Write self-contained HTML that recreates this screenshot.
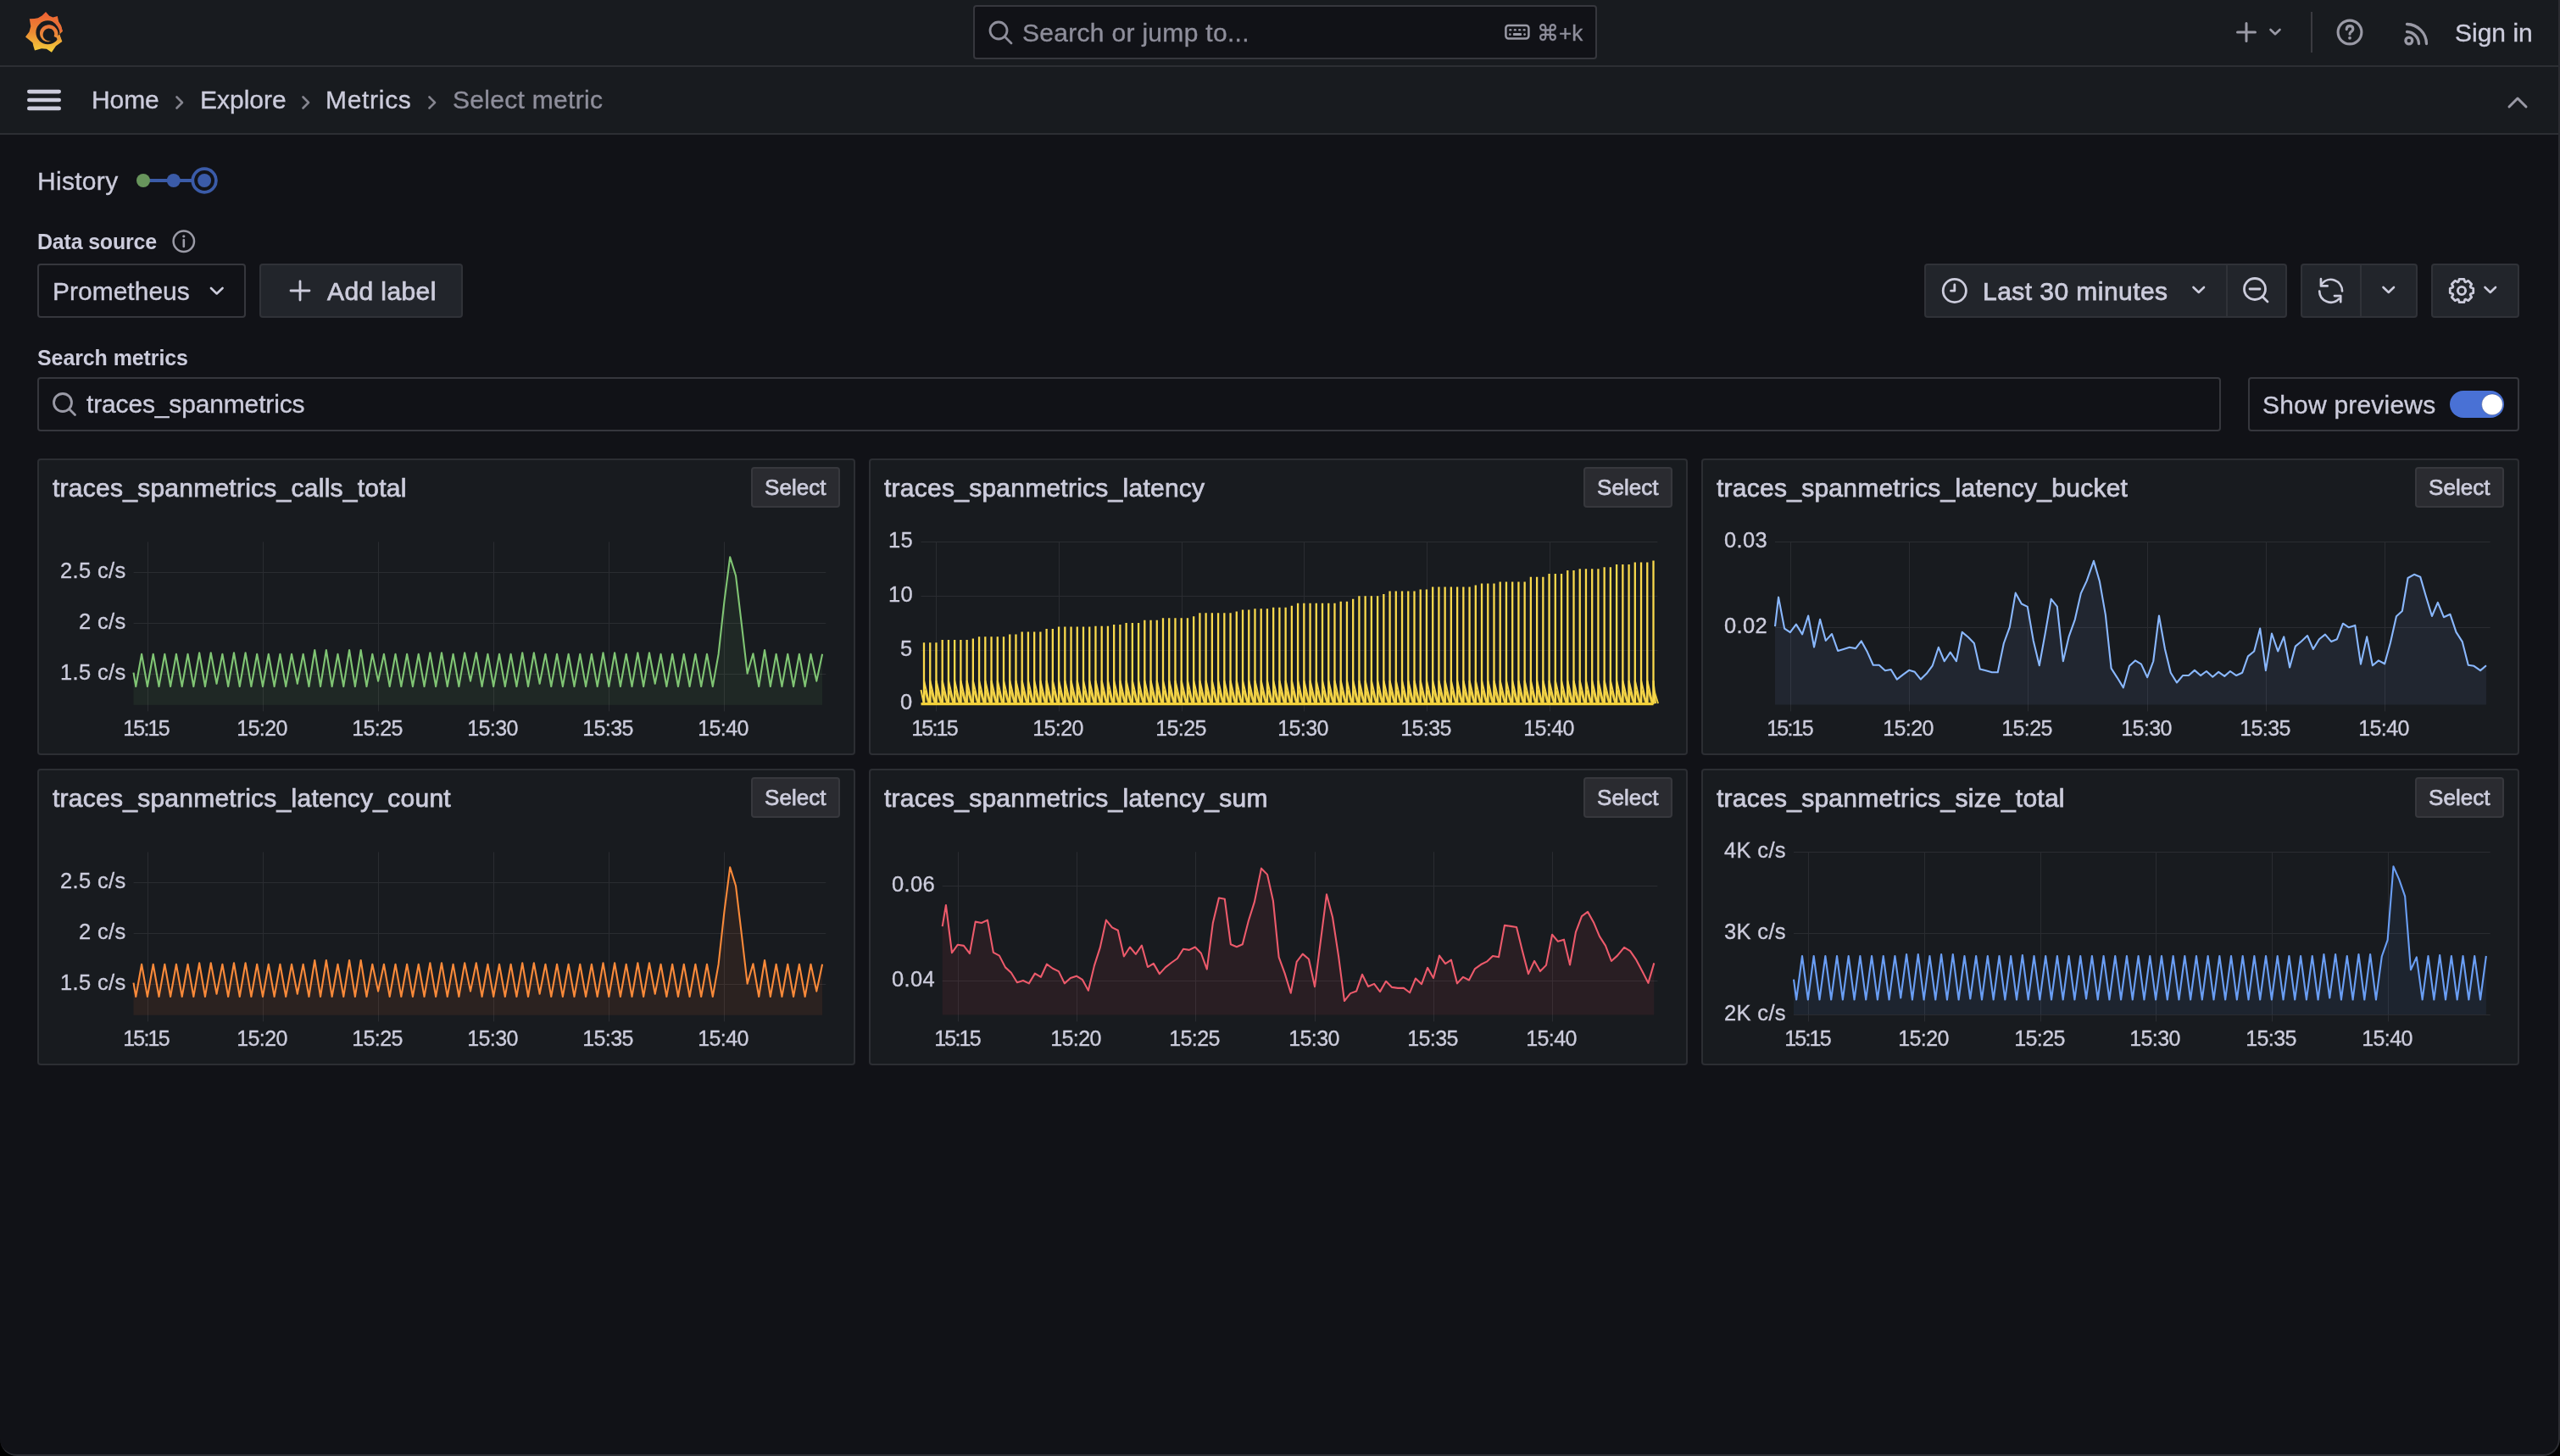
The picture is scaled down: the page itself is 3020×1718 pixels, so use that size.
<!DOCTYPE html>
<html><head><meta charset="utf-8"><title>Grafana - Metrics</title>
<style>
html,body{margin:0;padding:0;background:#000;overflow:hidden;}
#app{position:relative;width:3020px;height:1718px;background:#111217;overflow:hidden;border-bottom-left-radius:20px;border-bottom-right-radius:20px;font-family:"Liberation Sans", sans-serif;}
.t{position:absolute;white-space:nowrap;line-height:1;font-family:"Liberation Sans", sans-serif;-webkit-text-stroke:0.35px currentColor;-webkit-font-smoothing:antialiased;will-change:transform;}
.m{-webkit-text-stroke:0.75px currentColor;}
.b{position:absolute;}
</style></head><body><div id="app">
<div class="b" style="left:0px;top:0px;width:3020px;height:77px;background:#181b1f;border-radius:0px;box-sizing:border-box;"></div><div class="b" style="left:0px;top:77px;width:3020px;height:2px;background:#2c2e33;border-radius:0px;box-sizing:border-box;"></div><svg class="b" style="left:24px;top:10px" width="56" height="56" viewBox="0 0 56 56"><defs><linearGradient id="lg" x1="0" y1="0" x2="0" y2="1"><stop offset="0" stop-color="#ee5f34"/><stop offset="0.5" stop-color="#ea8a33"/><stop offset="1" stop-color="#f5d03c"/></linearGradient></defs>
<polygon fill="url(#lg)" points="30,4 34.2,8.7 38.5,10.4 43.8,9 45.2,15.5 48,20 49.8,27 46.2,30.5 49.4,39 42,44.2 36.9,51.7 31,47.8 25,47.3 17,49.6 15.3,44 14.6,40.4 6,33.5 10.5,27.5 12.3,21 10.8,12.3 16.5,12 20.8,11.2 25.5,8.5"/>
<circle cx="32.4" cy="28.3" r="14" fill="#181b1f"/>
<path d="M39,12.6 Q48.5,17 49.8,27 L46.6,27.8 Q45,20.5 38,15.2 Z" fill="#e86c37"/>
<path d="M43.48,34.81 L43.85,33.90 L44.14,32.96 L44.35,32.00 L44.47,31.02 L44.50,30.04 L44.44,29.06 L44.29,28.09 L44.06,27.13 L43.74,26.21 L43.34,25.31 L42.86,24.45 L42.31,23.64 L41.68,22.88 L40.99,22.19 L40.24,21.55 L39.43,20.99 L38.58,20.50 L37.68,20.09 L36.76,19.77 L35.80,19.53 L34.83,19.37 L33.85,19.30 L32.87,19.32 L31.89,19.43 L30.93,19.63 L29.99,19.91 L29.08,20.28 L28.21,20.73 L27.37,21.25 L26.59,21.85 L25.87,22.51 L25.21,23.24 L24.62,24.03 L24.10,24.86 L23.66,25.74 L23.29,26.65 L23.11,27.62 L23.01,28.59 L22.99,29.55 L23.07,30.51 L23.23,31.44 L23.48,32.35 L23.80,33.23 L24.20,34.06 L24.66,34.85 L25.20,35.59 L25.79,36.27 L26.43,36.88 L27.12,37.43 L27.86,37.91 L28.62,38.32 L29.42,38.65 L30.23,38.91 L31.05,39.09 L31.88,39.20 L32.70,39.22 L33.52,39.17 L34.32,39.05 L35.10,38.86 L35.85,38.60 L35.77,38.31 L35.02,38.40 L34.27,38.42 L33.53,38.37 L32.80,38.26 L32.09,38.08 L31.41,37.84 L30.76,37.54 L30.14,37.19 L29.56,36.79 L29.03,36.34 L28.55,35.84 L28.11,35.31 L27.74,34.75 L27.41,34.17 L27.15,33.56 L26.94,32.94 L26.79,32.30 L26.70,31.67 L26.67,31.03 L26.70,30.40 L26.79,29.78 L26.93,29.18 L27.12,28.60 L27.36,28.05 L27.58,27.50 L27.85,26.97 L28.16,26.46 L28.52,25.99 L28.92,25.55 L29.36,25.14 L29.83,24.78 L30.33,24.47 L30.86,24.19 L31.41,23.97 L31.98,23.80 L32.57,23.68 L33.16,23.61 L33.75,23.60 L34.35,23.64 L34.93,23.74 L35.51,23.88 L36.07,24.08 L36.61,24.33 L37.13,24.62 L37.62,24.96 L38.07,25.35 L38.49,25.77 L38.87,26.23 L39.21,26.72 L39.50,27.24 L39.74,27.78 L39.93,28.34 L40.08,28.92 L40.16,29.51 L40.20,30.10 L40.18,30.70 L40.11,31.29 L39.98,31.87 L39.81,32.44 L39.58,32.99 Z" fill="url(#lg2)"/>
<defs><linearGradient id="lg2" gradientUnits="userSpaceOnUse" x1="0" y1="18" x2="0" y2="42"><stop offset="0" stop-color="#e9703a"/><stop offset="1" stop-color="#ec9a38"/></linearGradient></defs>
<path d="M42.5,33.5 L46.2,30.5 L47.6,35.5 L44,38 Z" fill="#e9963a"/></svg><div class="b" style="left:1148px;top:6px;width:736px;height:64px;background:#111217;border:2px solid #36373d;border-radius:4px;box-sizing:border-box;"></div><svg class="b" style="left:1163px;top:22px" width="36" height="36" viewBox="0 0 36 36"><circle cx="15" cy="14" r="10" fill="none" stroke="#8e8e9b" stroke-width="2.8"/><line x1="22.5" y1="21.5" x2="30" y2="29" stroke="#8e8e9b" stroke-width="2.8" stroke-linecap="round"/></svg><div class="t " style="left:1206.0px;top:23.6px;font-size:30px;color:#8e8e9b;font-weight:400;letter-spacing:0.3px;">Search or jump to...</div><svg class="b" style="left:1774px;top:28px" width="32" height="22" viewBox="0 0 32 22"><rect x="2.4" y="1.9" width="27" height="15.6" rx="3.2" fill="none" stroke="#9a9aa6" stroke-width="2.5"/><g fill="#9a9aa6"><ellipse cx="7.8" cy="7.3" rx="1.6" ry="1.2"/><ellipse cx="13.3" cy="7.3" rx="1.6" ry="1.2"/><ellipse cx="18.7" cy="7.3" rx="1.6" ry="1.2"/><ellipse cx="24.1" cy="7.3" rx="1.6" ry="1.2"/><circle cx="7.3" cy="12.6" r="1.3"/><rect x="10.9" y="11.1" width="10.1" height="3" rx="1"/><circle cx="24.6" cy="12.6" r="1.3"/></g></svg><div class="t " style="left:1813.0px;top:26.0px;font-size:26px;color:#8e8e9b;font-weight:400;letter-spacing:0px;font-family:"Liberation Sans",sans-serif;">&#8984;+k</div><svg class="b" style="left:2636px;top:24px" width="28" height="28" viewBox="0 0 28 28"><path d="M14,3.5 V24.5 M3.5,14 H24.5" stroke="#9a9aa6" stroke-width="3" stroke-linecap="round"/></svg><svg class="b" style="left:2675px;top:32px" width="18" height="13" viewBox="0 0 18 13"><path d="M3.5,3 L9,8.3 L14.5,3" fill="none" stroke="#9a9aa6" stroke-width="2.6" stroke-linecap="round" stroke-linejoin="round"/></svg><div class="b" style="left:2726px;top:14px;width:2px;height:48px;background:#3a3b40;border-radius:0px;box-sizing:border-box;"></div><svg class="b" style="left:2755px;top:21px" width="34" height="34" viewBox="0 0 34 34"><circle cx="17" cy="17" r="13.9" fill="none" stroke="#9a9aa6" stroke-width="3.1"/><path d="M13.2,13.6 Q13.4,9.6 17,9.6 Q20.8,9.6 20.8,13.1 Q20.8,15.6 17.9,17 Q17,17.5 17,19.3" fill="none" stroke="#9a9aa6" stroke-width="3.1" stroke-linecap="round"/><circle cx="17" cy="23.8" r="1.9" fill="#9a9aa6"/></svg><svg class="b" style="left:2834px;top:24px" width="32" height="32" viewBox="0 0 32 32"><circle cx="7.8" cy="24" r="3.9" fill="none" stroke="#9a9aa6" stroke-width="3.3"/><path d="M5.5,13.5 A14.5,14.5 0 0 1 19.5,27.5" fill="none" stroke="#9a9aa6" stroke-width="3.3" stroke-linecap="round"/><path d="M5.5,4.5 A23.5,23.5 0 0 1 28.5,27.5" fill="none" stroke="#9a9aa6" stroke-width="3.3" stroke-linecap="round"/></svg><div class="t " style="left:2896.0px;top:24.1px;font-size:30px;color:#ccccdc;font-weight:400;letter-spacing:0px;">Sign in</div><div class="b" style="left:0px;top:79px;width:3020px;height:78px;background:#181b1f;border-radius:0px;box-sizing:border-box;"></div><div class="b" style="left:0px;top:157px;width:3020px;height:2px;background:#2c2e33;border-radius:0px;box-sizing:border-box;"></div><svg class="b" style="left:30px;top:104px" width="44" height="28" viewBox="0 0 44 28"><g stroke="#ccccdc" stroke-width="4.6" stroke-linecap="round"><line x1="4.3" y1="4.1" x2="39.7" y2="4.1"/><line x1="4.3" y1="14" x2="39.7" y2="14"/><line x1="4.3" y1="23.9" x2="39.7" y2="23.9"/></g></svg><div class="t " style="left:107.7px;top:103.4px;font-size:30px;color:#ccccdc;font-weight:400;letter-spacing:-0.1px;">Home</div><svg class="b" style="left:204px;top:111px" width="16" height="20" viewBox="0 0 16 20"><path d="M4.5,3.5 L11,10 L4.5,16.5" fill="none" stroke="#85858f" stroke-width="2.6" stroke-linecap="round" stroke-linejoin="round"/></svg><div class="t " style="left:236.0px;top:103.4px;font-size:30px;color:#ccccdc;font-weight:400;letter-spacing:0px;">Explore</div><svg class="b" style="left:353px;top:111px" width="16" height="20" viewBox="0 0 16 20"><path d="M4.5,3.5 L11,10 L4.5,16.5" fill="none" stroke="#85858f" stroke-width="2.6" stroke-linecap="round" stroke-linejoin="round"/></svg><div class="t " style="left:384.0px;top:103.4px;font-size:30px;color:#ccccdc;font-weight:400;letter-spacing:0.7px;">Metrics</div><svg class="b" style="left:502px;top:111px" width="16" height="20" viewBox="0 0 16 20"><path d="M4.5,3.5 L11,10 L4.5,16.5" fill="none" stroke="#85858f" stroke-width="2.6" stroke-linecap="round" stroke-linejoin="round"/></svg><div class="t " style="left:534.0px;top:103.4px;font-size:30px;color:#8e8e9b;font-weight:400;letter-spacing:0.3px;">Select metric</div><svg class="b" style="left:2956px;top:111px" width="28" height="20" viewBox="0 0 28 20"><path d="M4,15 L14,5 L24,15" fill="none" stroke="#9a9aa6" stroke-width="3" stroke-linecap="round" stroke-linejoin="round"/></svg><div class="t " style="left:44.0px;top:198.6px;font-size:30px;color:#ccccdc;font-weight:400;letter-spacing:0.3px;">History</div><svg class="b" style="left:148px;top:194px" width="112" height="40" viewBox="0 0 112 40"><line x1="21" y1="19" x2="93" y2="19" stroke="#3b5ba8" stroke-width="4.2"/><circle cx="21" cy="19" r="8" fill="#68955c"/><circle cx="56.8" cy="19" r="8" fill="#3b5ba8"/><circle cx="93.1" cy="19" r="13.8" fill="#111217" stroke="#3b5ba8" stroke-width="3.8"/><circle cx="93.1" cy="19" r="8" fill="#3b5ba8"/></svg><div class="t " style="left:44.0px;top:272.8px;font-size:25px;color:#ccccdc;font-weight:700;letter-spacing:-0.2px;-webkit-text-stroke:0;">Data source</div><svg class="b" style="left:202px;top:270px" width="30" height="30" viewBox="0 0 30 30"><circle cx="14.8" cy="14.8" r="12.2" fill="none" stroke="#9a9aa6" stroke-width="2.5"/><line x1="14.8" y1="13" x2="14.8" y2="21" stroke="#9a9aa6" stroke-width="2.6" stroke-linecap="round"/><circle cx="14.8" cy="8.8" r="1.6" fill="#9a9aa6"/></svg><div class="b" style="left:44px;top:311px;width:246px;height:64px;background:#111217;border:2px solid #36373d;border-radius:4px;box-sizing:border-box;"></div><div class="t " style="left:61.5px;top:328.6px;font-size:30px;color:#ccccdc;font-weight:400;letter-spacing:0px;">Prometheus</div><svg class="b" style="left:246px;top:336px" width="20" height="16" viewBox="0 0 20 16"><path d="M3,4 L9.7,10.5 L16.5,4" fill="none" stroke="#ccccdc" stroke-width="2.6" stroke-linecap="round" stroke-linejoin="round"/></svg><div class="b" style="left:306px;top:311px;width:240px;height:64px;background:#22252b;border:2px solid #303238;border-radius:4px;box-sizing:border-box;"></div><svg class="b" style="left:340px;top:329px" width="28" height="28" viewBox="0 0 28 28"><path d="M14,3 V25 M3,14 H25" stroke="#ccccdc" stroke-width="2.8" stroke-linecap="round"/></svg><div class="t m" style="left:386.0px;top:328.6px;font-size:30px;color:#ccccdc;font-weight:400;letter-spacing:0.4px;">Add label</div><div class="b" style="left:2270px;top:311px;width:428px;height:64px;background:#22252b;border:2px solid #303238;border-radius:4px;box-sizing:border-box;"></div><div class="b" style="left:2626px;top:313px;width:2px;height:60px;background:#303238;border-radius:0px;box-sizing:border-box;"></div><svg class="b" style="left:2286px;top:324px" width="38" height="38" viewBox="0 0 38 38"><circle cx="19.8" cy="19" r="13.6" fill="none" stroke="#ccccdc" stroke-width="2.8"/><path d="M19.8,12 V19.2 H15.5" fill="none" stroke="#ccccdc" stroke-width="2.8" stroke-linecap="round" stroke-linejoin="round"/></svg><div class="t m" style="left:2339.0px;top:328.6px;font-size:30px;color:#ccccdc;font-weight:400;letter-spacing:0.45px;">Last 30 minutes</div><svg class="b" style="left:2584px;top:334px" width="20" height="16" viewBox="0 0 20 16"><path d="M3.5,5 L9.8,11 L16,5" fill="none" stroke="#ccccdc" stroke-width="2.6" stroke-linecap="round" stroke-linejoin="round"/></svg><svg class="b" style="left:2643px;top:324px" width="38" height="38" viewBox="0 0 38 38"><circle cx="17" cy="17" r="12.5" fill="none" stroke="#ccccdc" stroke-width="2.8"/><line x1="11" y1="17" x2="23" y2="17" stroke="#ccccdc" stroke-width="2.8" stroke-linecap="round"/><line x1="26" y1="26" x2="32" y2="32" stroke="#ccccdc" stroke-width="2.8" stroke-linecap="round"/></svg><div class="b" style="left:2714px;top:311px;width:138px;height:64px;background:#22252b;border:2px solid #303238;border-radius:4px;box-sizing:border-box;"></div><div class="b" style="left:2784px;top:313px;width:2px;height:60px;background:#303238;border-radius:0px;box-sizing:border-box;"></div><svg class="b" style="left:2730px;top:324px" width="38" height="38" viewBox="0 0 38 38"><g transform="translate(20,19) scale(0.92) translate(-20,-19)"><path d="M8.3,9.8 A14.8,14.8 0 0 1 34.2,19.5" fill="none" stroke="#ccccdc" stroke-width="2.9" stroke-linecap="round"/><path d="M6.9,4 V12.9 H15.3" fill="none" stroke="#ccccdc" stroke-width="2.9" stroke-linecap="round" stroke-linejoin="round"/><path d="M5,19.5 A14.6,14.6 0 0 0 30,29.5" fill="none" stroke="#ccccdc" stroke-width="2.9" stroke-linecap="round"/><path d="M24.3,25.6 H32.2 V33.5" fill="none" stroke="#ccccdc" stroke-width="2.9" stroke-linecap="round" stroke-linejoin="round"/></g></svg><svg class="b" style="left:2808px;top:334px" width="20" height="16" viewBox="0 0 20 16"><path d="M3.5,5 L9.8,11 L16,5" fill="none" stroke="#ccccdc" stroke-width="2.6" stroke-linecap="round" stroke-linejoin="round"/></svg><div class="b" style="left:2868px;top:311px;width:104px;height:64px;background:#22252b;border:2px solid #303238;border-radius:4px;box-sizing:border-box;"></div><svg class="b" style="left:2884px;top:323px" width="40" height="40" viewBox="0 0 40 40"><polygon points="33.72,17.22 33.72,22.78 30.56,23.74 30.11,24.83 31.67,27.74 27.74,31.67 24.83,30.11 23.74,30.56 22.78,33.72 17.22,33.72 16.26,30.56 15.17,30.11 12.26,31.67 8.33,27.74 9.89,24.83 9.44,23.74 6.28,22.78 6.28,17.22 9.44,16.26 9.89,15.17 8.33,12.26 12.26,8.33 15.17,9.89 16.26,9.44 17.22,6.28 22.78,6.28 23.74,9.44 24.83,9.89 27.74,8.33 31.67,12.26 30.11,15.17 30.56,16.26" fill="none" stroke="#ccccdc" stroke-width="2.8" stroke-linejoin="round"/><circle cx="20" cy="20" r="4.6" fill="none" stroke="#ccccdc" stroke-width="2.9"/></svg><svg class="b" style="left:2928px;top:334px" width="20" height="16" viewBox="0 0 20 16"><path d="M3.5,5 L9.8,11 L16,5" fill="none" stroke="#ccccdc" stroke-width="2.6" stroke-linecap="round" stroke-linejoin="round"/></svg><div class="t " style="left:44.0px;top:409.8px;font-size:25px;color:#ccccdc;font-weight:700;letter-spacing:-0.1px;-webkit-text-stroke:0;">Search metrics</div><div class="b" style="left:44px;top:445px;width:2576px;height:64px;background:#111217;border:2px solid #36373d;border-radius:4px;box-sizing:border-box;"></div><svg class="b" style="left:60px;top:461px" width="34" height="34" viewBox="0 0 34 34"><circle cx="14" cy="14" r="10.5" fill="none" stroke="#9a9aa6" stroke-width="2.8"/><line x1="22" y1="22" x2="28.5" y2="28.5" stroke="#9a9aa6" stroke-width="2.8" stroke-linecap="round"/></svg><div class="t " style="left:102.0px;top:462.2px;font-size:30px;color:#ccccdc;font-weight:400;letter-spacing:-0.15px;">traces_spanmetrics</div><div class="b" style="left:2652px;top:445px;width:320px;height:64px;background:#111217;border:2px solid #36373d;border-radius:4px;box-sizing:border-box;"></div><div class="t " style="left:2669.0px;top:462.6px;font-size:30px;color:#ccccdc;font-weight:400;letter-spacing:0.2px;">Show previews</div><div class="b" style="left:2890px;top:461px;width:64px;height:32px;background:#4971d5;border-radius:16px;box-sizing:border-box;"></div><svg class="b" style="left:2924px;top:464px" width="32" height="26" viewBox="0 0 32 26"><circle cx="16" cy="13.3" r="12.4" fill="#ffffff" stroke="rgba(20,40,100,0.45)" stroke-width="0.8"/></svg><div class="b" style="left:44px;top:541px;width:965px;height:350px;background:#181b1f;border:2px solid #2c2e33;border-radius:4px;box-sizing:border-box;"></div><div class="t m" style="left:61.5px;top:561.1px;font-size:30px;color:#ccccdc;font-weight:400;letter-spacing:0.25px;">traces_spanmetrics_calls_total</div><div class="b" style="left:886px;top:551px;width:105px;height:48px;background:#2a2b30;border:2px solid #37383d;border-radius:4px;box-sizing:border-box;"></div><div class="t m" style="left:901.5px;top:562.0px;font-size:26px;color:#ccccdc;font-weight:400;letter-spacing:0.05px;">Select</div><div class="b" style="left:1025px;top:541px;width:966px;height:350px;background:#181b1f;border:2px solid #2c2e33;border-radius:4px;box-sizing:border-box;"></div><div class="t m" style="left:1042.5px;top:561.1px;font-size:30px;color:#ccccdc;font-weight:400;letter-spacing:0.25px;">traces_spanmetrics_latency</div><div class="b" style="left:1868px;top:551px;width:105px;height:48px;background:#2a2b30;border:2px solid #37383d;border-radius:4px;box-sizing:border-box;"></div><div class="t m" style="left:1883.5px;top:562.0px;font-size:26px;color:#ccccdc;font-weight:400;letter-spacing:0.05px;">Select</div><div class="b" style="left:2007px;top:541px;width:965px;height:350px;background:#181b1f;border:2px solid #2c2e33;border-radius:4px;box-sizing:border-box;"></div><div class="t m" style="left:2024.5px;top:561.1px;font-size:30px;color:#ccccdc;font-weight:400;letter-spacing:0.25px;">traces_spanmetrics_latency_bucket</div><div class="b" style="left:2849px;top:551px;width:105px;height:48px;background:#2a2b30;border:2px solid #37383d;border-radius:4px;box-sizing:border-box;"></div><div class="t m" style="left:2864.5px;top:562.0px;font-size:26px;color:#ccccdc;font-weight:400;letter-spacing:0.05px;">Select</div><div class="b" style="left:44px;top:907px;width:965px;height:350px;background:#181b1f;border:2px solid #2c2e33;border-radius:4px;box-sizing:border-box;"></div><div class="t m" style="left:61.5px;top:927.1px;font-size:30px;color:#ccccdc;font-weight:400;letter-spacing:0.25px;">traces_spanmetrics_latency_count</div><div class="b" style="left:886px;top:917px;width:105px;height:48px;background:#2a2b30;border:2px solid #37383d;border-radius:4px;box-sizing:border-box;"></div><div class="t m" style="left:901.5px;top:928.0px;font-size:26px;color:#ccccdc;font-weight:400;letter-spacing:0.05px;">Select</div><div class="b" style="left:1025px;top:907px;width:966px;height:350px;background:#181b1f;border:2px solid #2c2e33;border-radius:4px;box-sizing:border-box;"></div><div class="t m" style="left:1042.5px;top:927.1px;font-size:30px;color:#ccccdc;font-weight:400;letter-spacing:0.25px;">traces_spanmetrics_latency_sum</div><div class="b" style="left:1868px;top:917px;width:105px;height:48px;background:#2a2b30;border:2px solid #37383d;border-radius:4px;box-sizing:border-box;"></div><div class="t m" style="left:1883.5px;top:928.0px;font-size:26px;color:#ccccdc;font-weight:400;letter-spacing:0.05px;">Select</div><div class="b" style="left:2007px;top:907px;width:965px;height:350px;background:#181b1f;border:2px solid #2c2e33;border-radius:4px;box-sizing:border-box;"></div><div class="t m" style="left:2024.5px;top:927.1px;font-size:30px;color:#ccccdc;font-weight:400;letter-spacing:0.25px;">traces_spanmetrics_size_total</div><div class="b" style="left:2849px;top:917px;width:105px;height:48px;background:#2a2b30;border:2px solid #37383d;border-radius:4px;box-sizing:border-box;"></div><div class="t m" style="left:2864.5px;top:928.0px;font-size:26px;color:#ccccdc;font-weight:400;letter-spacing:0.05px;">Select</div><div class="t" style="right:2871.5px;top:661.0px;font-size:25.5px;color:#ccccdc;font-weight:400;letter-spacing:0.35px;">2.5 c/s</div><div class="t" style="right:2871.5px;top:720.8px;font-size:25.5px;color:#ccccdc;font-weight:400;letter-spacing:0.35px;">2 c/s</div><div class="t" style="right:2871.5px;top:780.9px;font-size:25.5px;color:#ccccdc;font-weight:400;letter-spacing:0.35px;">1.5 c/s</div><div class="t" style="left:-127.7px;width:600px;text-align:center;top:846.8px;font-size:25px;color:#ccccdc;font-weight:400;letter-spacing:-1.8px;">15:15</div><div class="t" style="left:9.1px;width:600px;text-align:center;top:846.8px;font-size:25px;color:#ccccdc;font-weight:400;letter-spacing:-0.6px;">15:20</div><div class="t" style="left:145.2px;width:600px;text-align:center;top:846.8px;font-size:25px;color:#ccccdc;font-weight:400;letter-spacing:-0.6px;">15:25</div><div class="t" style="left:280.9px;width:600px;text-align:center;top:846.8px;font-size:25px;color:#ccccdc;font-weight:400;letter-spacing:-0.6px;">15:30</div><div class="t" style="left:417.0px;width:600px;text-align:center;top:846.8px;font-size:25px;color:#ccccdc;font-weight:400;letter-spacing:-0.6px;">15:35</div><div class="t" style="left:553.1px;width:600px;text-align:center;top:846.8px;font-size:25px;color:#ccccdc;font-weight:400;letter-spacing:-0.6px;">15:40</div><div class="t" style="right:2871.5px;top:1027.0px;font-size:25.5px;color:#ccccdc;font-weight:400;letter-spacing:0.35px;">2.5 c/s</div><div class="t" style="right:2871.5px;top:1086.8px;font-size:25.5px;color:#ccccdc;font-weight:400;letter-spacing:0.35px;">2 c/s</div><div class="t" style="right:2871.5px;top:1146.9px;font-size:25.5px;color:#ccccdc;font-weight:400;letter-spacing:0.35px;">1.5 c/s</div><div class="t" style="left:-127.7px;width:600px;text-align:center;top:1212.8px;font-size:25px;color:#ccccdc;font-weight:400;letter-spacing:-1.8px;">15:15</div><div class="t" style="left:9.1px;width:600px;text-align:center;top:1212.8px;font-size:25px;color:#ccccdc;font-weight:400;letter-spacing:-0.6px;">15:20</div><div class="t" style="left:145.2px;width:600px;text-align:center;top:1212.8px;font-size:25px;color:#ccccdc;font-weight:400;letter-spacing:-0.6px;">15:25</div><div class="t" style="left:280.9px;width:600px;text-align:center;top:1212.8px;font-size:25px;color:#ccccdc;font-weight:400;letter-spacing:-0.6px;">15:30</div><div class="t" style="left:417.0px;width:600px;text-align:center;top:1212.8px;font-size:25px;color:#ccccdc;font-weight:400;letter-spacing:-0.6px;">15:35</div><div class="t" style="left:553.1px;width:600px;text-align:center;top:1212.8px;font-size:25px;color:#ccccdc;font-weight:400;letter-spacing:-0.6px;">15:40</div><div class="t" style="right:913.0px;top:990.8px;font-size:25.5px;color:#ccccdc;font-weight:400;letter-spacing:0.35px;">4K c/s</div><div class="t" style="right:913.0px;top:1086.7px;font-size:25.5px;color:#ccccdc;font-weight:400;letter-spacing:0.35px;">3K c/s</div><div class="t" style="right:913.0px;top:1183.0px;font-size:25.5px;color:#ccccdc;font-weight:400;letter-spacing:0.35px;">2K c/s</div><div class="t" style="left:1831.5px;width:600px;text-align:center;top:1212.8px;font-size:25px;color:#ccccdc;font-weight:400;letter-spacing:-1.8px;">15:15</div><div class="t" style="left:1969.0px;width:600px;text-align:center;top:1212.8px;font-size:25px;color:#ccccdc;font-weight:400;letter-spacing:-0.6px;">15:20</div><div class="t" style="left:2105.9px;width:600px;text-align:center;top:1212.8px;font-size:25px;color:#ccccdc;font-weight:400;letter-spacing:-0.6px;">15:25</div><div class="t" style="left:2242.0px;width:600px;text-align:center;top:1212.8px;font-size:25px;color:#ccccdc;font-weight:400;letter-spacing:-0.6px;">15:30</div><div class="t" style="left:2378.9px;width:600px;text-align:center;top:1212.8px;font-size:25px;color:#ccccdc;font-weight:400;letter-spacing:-0.6px;">15:35</div><div class="t" style="left:2515.8px;width:600px;text-align:center;top:1212.8px;font-size:25px;color:#ccccdc;font-weight:400;letter-spacing:-0.6px;">15:40</div><div class="t" style="right:935.0px;top:625.0px;font-size:25.5px;color:#ccccdc;font-weight:400;letter-spacing:0.35px;">0.03</div><div class="t" style="right:935.0px;top:725.6px;font-size:25.5px;color:#ccccdc;font-weight:400;letter-spacing:0.35px;">0.02</div><div class="t" style="left:1810.6px;width:600px;text-align:center;top:846.8px;font-size:25px;color:#ccccdc;font-weight:400;letter-spacing:-1.8px;">15:15</div><div class="t" style="left:1951.2px;width:600px;text-align:center;top:846.8px;font-size:25px;color:#ccccdc;font-weight:400;letter-spacing:-0.6px;">15:20</div><div class="t" style="left:2091.2px;width:600px;text-align:center;top:846.8px;font-size:25px;color:#ccccdc;font-weight:400;letter-spacing:-0.6px;">15:25</div><div class="t" style="left:2232.0px;width:600px;text-align:center;top:846.8px;font-size:25px;color:#ccccdc;font-weight:400;letter-spacing:-0.6px;">15:30</div><div class="t" style="left:2371.9px;width:600px;text-align:center;top:846.8px;font-size:25px;color:#ccccdc;font-weight:400;letter-spacing:-0.6px;">15:35</div><div class="t" style="left:2511.9px;width:600px;text-align:center;top:846.8px;font-size:25px;color:#ccccdc;font-weight:400;letter-spacing:-0.6px;">15:40</div><div class="t" style="right:1917.0px;top:1030.6px;font-size:25.5px;color:#ccccdc;font-weight:400;letter-spacing:0.35px;">0.06</div><div class="t" style="right:1917.0px;top:1142.8px;font-size:25.5px;color:#ccccdc;font-weight:400;letter-spacing:0.35px;">0.04</div><div class="t" style="left:828.7px;width:600px;text-align:center;top:1212.8px;font-size:25px;color:#ccccdc;font-weight:400;letter-spacing:-1.8px;">15:15</div><div class="t" style="left:968.9px;width:600px;text-align:center;top:1212.8px;font-size:25px;color:#ccccdc;font-weight:400;letter-spacing:-0.6px;">15:20</div><div class="t" style="left:1108.9px;width:600px;text-align:center;top:1212.8px;font-size:25px;color:#ccccdc;font-weight:400;letter-spacing:-0.6px;">15:25</div><div class="t" style="left:1250.1px;width:600px;text-align:center;top:1212.8px;font-size:25px;color:#ccccdc;font-weight:400;letter-spacing:-0.6px;">15:30</div><div class="t" style="left:1390.0px;width:600px;text-align:center;top:1212.8px;font-size:25px;color:#ccccdc;font-weight:400;letter-spacing:-0.6px;">15:35</div><div class="t" style="left:1530.0px;width:600px;text-align:center;top:1212.8px;font-size:25px;color:#ccccdc;font-weight:400;letter-spacing:-0.6px;">15:40</div><div class="t" style="right:1943.0px;top:625.0px;font-size:25.5px;color:#ccccdc;font-weight:400;letter-spacing:0.35px;">15</div><div class="t" style="right:1943.0px;top:688.8px;font-size:25.5px;color:#ccccdc;font-weight:400;letter-spacing:0.35px;">10</div><div class="t" style="right:1943.0px;top:752.6px;font-size:25.5px;color:#ccccdc;font-weight:400;letter-spacing:0.35px;">5</div><div class="t" style="right:1943.0px;top:816.4px;font-size:25.5px;color:#ccccdc;font-weight:400;letter-spacing:0.35px;">0</div><div class="t" style="left:802.4px;width:600px;text-align:center;top:846.8px;font-size:25px;color:#ccccdc;font-weight:400;letter-spacing:-1.8px;">15:15</div><div class="t" style="left:948.0px;width:600px;text-align:center;top:846.8px;font-size:25px;color:#ccccdc;font-weight:400;letter-spacing:-0.6px;">15:20</div><div class="t" style="left:1093.0px;width:600px;text-align:center;top:846.8px;font-size:25px;color:#ccccdc;font-weight:400;letter-spacing:-0.6px;">15:25</div><div class="t" style="left:1236.9px;width:600px;text-align:center;top:846.8px;font-size:25px;color:#ccccdc;font-weight:400;letter-spacing:-0.6px;">15:30</div><div class="t" style="left:1381.9px;width:600px;text-align:center;top:846.8px;font-size:25px;color:#ccccdc;font-weight:400;letter-spacing:-0.6px;">15:35</div><div class="t" style="left:1526.9px;width:600px;text-align:center;top:846.8px;font-size:25px;color:#ccccdc;font-weight:400;letter-spacing:-0.6px;">15:40</div>
<svg class="b" style="left:0;top:0" width="3020" height="1718" viewBox="0 0 3020 1718"><rect x="157.6" y="675" width="816.7" height="1" fill="#2a2c31"/><rect x="157.6" y="735" width="816.7" height="1" fill="#2a2c31"/><rect x="157.6" y="795" width="816.7" height="1" fill="#2a2c31"/><rect x="174" y="639.4" width="1" height="200.0" fill="#2a2c31"/><rect x="310" y="639.4" width="1" height="200.0" fill="#2a2c31"/><rect x="446" y="639.4" width="1" height="200.0" fill="#2a2c31"/><rect x="582" y="639.4" width="1" height="200.0" fill="#2a2c31"/><rect x="718" y="639.4" width="1" height="200.0" fill="#2a2c31"/><rect x="854" y="639.4" width="1" height="200.0" fill="#2a2c31"/><path d="M157.50,793.65 L160.29,810.00 L167.10,771.80 L173.91,810.00 L180.71,771.80 L187.51,810.00 L194.32,771.80 L201.12,810.00 L207.93,771.80 L214.73,810.00 L221.54,771.80 L228.34,810.00 L235.15,770.20 L241.95,810.00 L248.76,770.20 L255.56,806.80 L262.37,771.80 L269.17,810.00 L275.98,770.20 L282.78,810.00 L289.59,770.20 L296.39,810.00 L303.20,771.80 L310.00,810.00 L316.81,771.80 L323.62,810.00 L330.42,771.80 L337.23,810.00 L344.03,771.80 L350.83,806.80 L357.64,771.80 L364.44,810.00 L371.25,767.00 L378.05,810.00 L384.86,767.00 L391.66,810.00 L398.47,771.80 L405.27,810.00 L412.08,767.00 L418.88,810.00 L425.69,767.00 L432.50,810.00 L439.30,771.80 L446.11,803.60 L452.91,771.80 L459.72,810.00 L466.52,771.80 L473.32,810.00 L480.13,771.80 L486.93,810.00 L493.74,771.80 L500.54,810.00 L507.35,770.20 L514.15,810.00 L520.96,770.20 L527.76,810.00 L534.57,771.80 L541.38,810.00 L548.18,770.20 L554.99,803.60 L561.79,770.20 L568.60,810.00 L575.40,771.80 L582.20,810.00 L589.01,771.80 L595.81,810.00 L602.62,771.80 L609.42,810.00 L616.23,770.20 L623.03,810.00 L629.84,770.20 L636.64,806.80 L643.45,771.80 L650.25,810.00 L657.06,771.80 L663.87,810.00 L670.67,771.80 L677.48,810.00 L684.28,771.80 L691.09,810.00 L697.89,771.80 L704.70,810.00 L711.50,770.20 L718.30,810.00 L725.11,770.20 L731.91,810.00 L738.72,771.80 L745.52,810.00 L752.33,770.20 L759.13,810.00 L765.94,770.20 L772.75,806.80 L779.55,771.80 L786.36,810.00 L793.16,771.80 L799.97,810.00 L806.77,771.80 L813.58,810.00 L820.38,771.80 L827.18,810.00 L833.99,771.80 L840.79,810.00 L847.60,771.90 L854.40,710.00 L861.21,657.20 L868.01,679.20 L874.82,736.20 L881.62,794.60 L888.43,771.20 L895.24,810.00 L902.04,767.00 L908.85,810.00 L915.65,771.80 L922.46,810.00 L929.26,771.80 L936.06,810.00 L942.87,771.80 L949.67,810.00 L956.48,771.80 L963.28,803.60 L970.09,771.80 L970.09,831.7 L157.50,831.7 Z" fill="rgba(115,191,105,0.085)" stroke="none"/><path d="M157.50,793.65 L160.29,810.00 L167.10,771.80 L173.91,810.00 L180.71,771.80 L187.51,810.00 L194.32,771.80 L201.12,810.00 L207.93,771.80 L214.73,810.00 L221.54,771.80 L228.34,810.00 L235.15,770.20 L241.95,810.00 L248.76,770.20 L255.56,806.80 L262.37,771.80 L269.17,810.00 L275.98,770.20 L282.78,810.00 L289.59,770.20 L296.39,810.00 L303.20,771.80 L310.00,810.00 L316.81,771.80 L323.62,810.00 L330.42,771.80 L337.23,810.00 L344.03,771.80 L350.83,806.80 L357.64,771.80 L364.44,810.00 L371.25,767.00 L378.05,810.00 L384.86,767.00 L391.66,810.00 L398.47,771.80 L405.27,810.00 L412.08,767.00 L418.88,810.00 L425.69,767.00 L432.50,810.00 L439.30,771.80 L446.11,803.60 L452.91,771.80 L459.72,810.00 L466.52,771.80 L473.32,810.00 L480.13,771.80 L486.93,810.00 L493.74,771.80 L500.54,810.00 L507.35,770.20 L514.15,810.00 L520.96,770.20 L527.76,810.00 L534.57,771.80 L541.38,810.00 L548.18,770.20 L554.99,803.60 L561.79,770.20 L568.60,810.00 L575.40,771.80 L582.20,810.00 L589.01,771.80 L595.81,810.00 L602.62,771.80 L609.42,810.00 L616.23,770.20 L623.03,810.00 L629.84,770.20 L636.64,806.80 L643.45,771.80 L650.25,810.00 L657.06,771.80 L663.87,810.00 L670.67,771.80 L677.48,810.00 L684.28,771.80 L691.09,810.00 L697.89,771.80 L704.70,810.00 L711.50,770.20 L718.30,810.00 L725.11,770.20 L731.91,810.00 L738.72,771.80 L745.52,810.00 L752.33,770.20 L759.13,810.00 L765.94,770.20 L772.75,806.80 L779.55,771.80 L786.36,810.00 L793.16,771.80 L799.97,810.00 L806.77,771.80 L813.58,810.00 L820.38,771.80 L827.18,810.00 L833.99,771.80 L840.79,810.00 L847.60,771.90 L854.40,710.00 L861.21,657.20 L868.01,679.20 L874.82,736.20 L881.62,794.60 L888.43,771.20 L895.24,810.00 L902.04,767.00 L908.85,810.00 L915.65,771.80 L922.46,810.00 L929.26,771.80 L936.06,810.00 L942.87,771.80 L949.67,810.00 L956.48,771.80 L963.28,803.60 L970.09,771.80" fill="none" stroke="#80c574" stroke-width="2.1" stroke-linejoin="round"/><rect x="157.6" y="1041" width="816.7" height="1" fill="#2a2c31"/><rect x="157.6" y="1101" width="816.7" height="1" fill="#2a2c31"/><rect x="157.6" y="1161" width="816.7" height="1" fill="#2a2c31"/><rect x="174" y="1005.4" width="1" height="200.0" fill="#2a2c31"/><rect x="310" y="1005.4" width="1" height="200.0" fill="#2a2c31"/><rect x="446" y="1005.4" width="1" height="200.0" fill="#2a2c31"/><rect x="582" y="1005.4" width="1" height="200.0" fill="#2a2c31"/><rect x="718" y="1005.4" width="1" height="200.0" fill="#2a2c31"/><rect x="854" y="1005.4" width="1" height="200.0" fill="#2a2c31"/><path d="M157.50,1159.65 L160.29,1176.00 L167.10,1137.80 L173.91,1176.00 L180.71,1137.80 L187.51,1176.00 L194.32,1137.80 L201.12,1176.00 L207.93,1137.80 L214.73,1176.00 L221.54,1137.80 L228.34,1176.00 L235.15,1136.20 L241.95,1176.00 L248.76,1136.20 L255.56,1172.80 L262.37,1137.80 L269.17,1176.00 L275.98,1136.20 L282.78,1176.00 L289.59,1136.20 L296.39,1176.00 L303.20,1137.80 L310.00,1176.00 L316.81,1137.80 L323.62,1176.00 L330.42,1137.80 L337.23,1176.00 L344.03,1137.80 L350.83,1172.80 L357.64,1137.80 L364.44,1176.00 L371.25,1133.00 L378.05,1176.00 L384.86,1133.00 L391.66,1176.00 L398.47,1137.80 L405.27,1176.00 L412.08,1133.00 L418.88,1176.00 L425.69,1133.00 L432.50,1176.00 L439.30,1137.80 L446.11,1169.60 L452.91,1137.80 L459.72,1176.00 L466.52,1137.80 L473.32,1176.00 L480.13,1137.80 L486.93,1176.00 L493.74,1137.80 L500.54,1176.00 L507.35,1136.20 L514.15,1176.00 L520.96,1136.20 L527.76,1176.00 L534.57,1137.80 L541.38,1176.00 L548.18,1136.20 L554.99,1169.60 L561.79,1136.20 L568.60,1176.00 L575.40,1137.80 L582.20,1176.00 L589.01,1137.80 L595.81,1176.00 L602.62,1137.80 L609.42,1176.00 L616.23,1136.20 L623.03,1176.00 L629.84,1136.20 L636.64,1172.80 L643.45,1137.80 L650.25,1176.00 L657.06,1137.80 L663.87,1176.00 L670.67,1137.80 L677.48,1176.00 L684.28,1137.80 L691.09,1176.00 L697.89,1137.80 L704.70,1176.00 L711.50,1136.20 L718.30,1176.00 L725.11,1136.20 L731.91,1176.00 L738.72,1137.80 L745.52,1176.00 L752.33,1136.20 L759.13,1176.00 L765.94,1136.20 L772.75,1172.80 L779.55,1137.80 L786.36,1176.00 L793.16,1137.80 L799.97,1176.00 L806.77,1137.80 L813.58,1176.00 L820.38,1137.80 L827.18,1176.00 L833.99,1137.80 L840.79,1176.00 L847.60,1137.90 L854.40,1076.00 L861.21,1023.20 L868.01,1045.20 L874.82,1102.20 L881.62,1160.60 L888.43,1137.20 L895.24,1176.00 L902.04,1133.00 L908.85,1176.00 L915.65,1137.80 L922.46,1176.00 L929.26,1137.80 L936.06,1176.00 L942.87,1137.80 L949.67,1176.00 L956.48,1137.80 L963.28,1169.60 L970.09,1137.80 L970.09,1197.7 L157.50,1197.7 Z" fill="rgba(250,120,50,0.085)" stroke="none"/><path d="M157.50,1159.65 L160.29,1176.00 L167.10,1137.80 L173.91,1176.00 L180.71,1137.80 L187.51,1176.00 L194.32,1137.80 L201.12,1176.00 L207.93,1137.80 L214.73,1176.00 L221.54,1137.80 L228.34,1176.00 L235.15,1136.20 L241.95,1176.00 L248.76,1136.20 L255.56,1172.80 L262.37,1137.80 L269.17,1176.00 L275.98,1136.20 L282.78,1176.00 L289.59,1136.20 L296.39,1176.00 L303.20,1137.80 L310.00,1176.00 L316.81,1137.80 L323.62,1176.00 L330.42,1137.80 L337.23,1176.00 L344.03,1137.80 L350.83,1172.80 L357.64,1137.80 L364.44,1176.00 L371.25,1133.00 L378.05,1176.00 L384.86,1133.00 L391.66,1176.00 L398.47,1137.80 L405.27,1176.00 L412.08,1133.00 L418.88,1176.00 L425.69,1133.00 L432.50,1176.00 L439.30,1137.80 L446.11,1169.60 L452.91,1137.80 L459.72,1176.00 L466.52,1137.80 L473.32,1176.00 L480.13,1137.80 L486.93,1176.00 L493.74,1137.80 L500.54,1176.00 L507.35,1136.20 L514.15,1176.00 L520.96,1136.20 L527.76,1176.00 L534.57,1137.80 L541.38,1176.00 L548.18,1136.20 L554.99,1169.60 L561.79,1136.20 L568.60,1176.00 L575.40,1137.80 L582.20,1176.00 L589.01,1137.80 L595.81,1176.00 L602.62,1137.80 L609.42,1176.00 L616.23,1136.20 L623.03,1176.00 L629.84,1136.20 L636.64,1172.80 L643.45,1137.80 L650.25,1176.00 L657.06,1137.80 L663.87,1176.00 L670.67,1137.80 L677.48,1176.00 L684.28,1137.80 L691.09,1176.00 L697.89,1137.80 L704.70,1176.00 L711.50,1136.20 L718.30,1176.00 L725.11,1136.20 L731.91,1176.00 L738.72,1137.80 L745.52,1176.00 L752.33,1136.20 L759.13,1176.00 L765.94,1136.20 L772.75,1172.80 L779.55,1137.80 L786.36,1176.00 L793.16,1137.80 L799.97,1176.00 L806.77,1137.80 L813.58,1176.00 L820.38,1137.80 L827.18,1176.00 L833.99,1137.80 L840.79,1176.00 L847.60,1137.90 L854.40,1076.00 L861.21,1023.20 L868.01,1045.20 L874.82,1102.20 L881.62,1160.60 L888.43,1137.20 L895.24,1176.00 L902.04,1133.00 L908.85,1176.00 L915.65,1137.80 L922.46,1176.00 L929.26,1137.80 L936.06,1176.00 L942.87,1137.80 L949.67,1176.00 L956.48,1137.80 L963.28,1169.60 L970.09,1137.80" fill="none" stroke="#fa8a3a" stroke-width="2.1" stroke-linejoin="round"/><rect x="2116.0" y="1005" width="821.7" height="1" fill="#2a2c31"/><rect x="2116.0" y="1101" width="821.7" height="1" fill="#2a2c31"/><rect x="2116.0" y="1197" width="821.7" height="1" fill="#2a2c31"/><rect x="2133" y="1005.2" width="1" height="200.2" fill="#2a2c31"/><rect x="2270" y="1005.2" width="1" height="200.2" fill="#2a2c31"/><rect x="2407" y="1005.2" width="1" height="200.2" fill="#2a2c31"/><rect x="2543" y="1005.2" width="1" height="200.2" fill="#2a2c31"/><rect x="2680" y="1005.2" width="1" height="200.2" fill="#2a2c31"/><rect x="2817" y="1005.2" width="1" height="200.2" fill="#2a2c31"/><path d="M2116.00,1155.69 L2119.16,1179.50 L2126.00,1128.00 L2132.84,1179.50 L2139.68,1128.00 L2146.51,1179.50 L2153.35,1128.00 L2160.19,1179.50 L2167.03,1128.00 L2173.87,1179.50 L2180.70,1128.00 L2187.54,1179.50 L2194.38,1128.00 L2201.22,1179.50 L2208.06,1128.00 L2214.89,1179.50 L2221.73,1128.00 L2228.57,1179.50 L2235.41,1128.00 L2242.25,1177.50 L2249.08,1126.00 L2255.92,1179.50 L2262.76,1126.00 L2269.60,1179.50 L2276.44,1128.00 L2283.27,1179.50 L2290.11,1126.00 L2296.95,1179.50 L2303.79,1126.00 L2310.63,1179.50 L2317.46,1128.00 L2324.30,1178.50 L2331.14,1128.00 L2337.98,1179.50 L2344.82,1128.00 L2351.65,1179.50 L2358.49,1128.00 L2365.33,1179.50 L2372.17,1128.00 L2379.01,1179.50 L2385.84,1127.00 L2392.68,1179.50 L2399.52,1128.00 L2406.36,1179.50 L2413.20,1128.00 L2420.03,1179.50 L2426.87,1128.00 L2433.71,1179.50 L2440.55,1128.00 L2447.39,1179.50 L2454.22,1128.00 L2461.06,1178.50 L2467.90,1128.00 L2474.74,1179.50 L2481.58,1128.00 L2488.41,1179.50 L2495.25,1128.00 L2502.09,1179.50 L2508.93,1128.00 L2515.77,1179.50 L2522.60,1128.00 L2529.44,1179.50 L2536.28,1128.00 L2543.12,1179.50 L2549.96,1128.00 L2556.79,1179.50 L2563.63,1128.00 L2570.47,1179.50 L2577.31,1128.00 L2584.15,1179.50 L2590.98,1128.00 L2597.82,1179.50 L2604.66,1128.00 L2611.50,1179.50 L2618.34,1128.00 L2625.17,1179.50 L2632.01,1128.00 L2638.85,1179.50 L2645.69,1128.00 L2652.53,1179.50 L2659.36,1128.00 L2666.20,1179.50 L2673.04,1128.00 L2679.88,1179.50 L2686.72,1128.00 L2693.55,1179.50 L2700.39,1128.00 L2707.23,1179.50 L2714.07,1128.00 L2720.91,1179.50 L2727.74,1128.00 L2734.58,1179.50 L2741.42,1126.00 L2748.26,1177.50 L2755.10,1126.00 L2761.93,1179.50 L2768.77,1128.00 L2775.61,1179.50 L2782.45,1126.00 L2789.29,1179.50 L2796.12,1126.00 L2802.96,1179.50 L2809.80,1128.50 L2816.64,1109.20 L2823.48,1022.30 L2830.31,1037.80 L2837.15,1057.70 L2843.99,1144.30 L2850.83,1129.40 L2857.67,1179.50 L2864.50,1128.00 L2871.34,1179.50 L2878.18,1127.00 L2885.02,1179.50 L2891.86,1128.00 L2898.69,1179.50 L2905.53,1128.00 L2912.37,1179.50 L2919.21,1128.00 L2926.05,1179.50 L2932.88,1128.00 L2932.88,1197.0 L2116.00,1197.0 Z" fill="rgba(87,148,242,0.08)" stroke="none"/><path d="M2116.00,1155.69 L2119.16,1179.50 L2126.00,1128.00 L2132.84,1179.50 L2139.68,1128.00 L2146.51,1179.50 L2153.35,1128.00 L2160.19,1179.50 L2167.03,1128.00 L2173.87,1179.50 L2180.70,1128.00 L2187.54,1179.50 L2194.38,1128.00 L2201.22,1179.50 L2208.06,1128.00 L2214.89,1179.50 L2221.73,1128.00 L2228.57,1179.50 L2235.41,1128.00 L2242.25,1177.50 L2249.08,1126.00 L2255.92,1179.50 L2262.76,1126.00 L2269.60,1179.50 L2276.44,1128.00 L2283.27,1179.50 L2290.11,1126.00 L2296.95,1179.50 L2303.79,1126.00 L2310.63,1179.50 L2317.46,1128.00 L2324.30,1178.50 L2331.14,1128.00 L2337.98,1179.50 L2344.82,1128.00 L2351.65,1179.50 L2358.49,1128.00 L2365.33,1179.50 L2372.17,1128.00 L2379.01,1179.50 L2385.84,1127.00 L2392.68,1179.50 L2399.52,1128.00 L2406.36,1179.50 L2413.20,1128.00 L2420.03,1179.50 L2426.87,1128.00 L2433.71,1179.50 L2440.55,1128.00 L2447.39,1179.50 L2454.22,1128.00 L2461.06,1178.50 L2467.90,1128.00 L2474.74,1179.50 L2481.58,1128.00 L2488.41,1179.50 L2495.25,1128.00 L2502.09,1179.50 L2508.93,1128.00 L2515.77,1179.50 L2522.60,1128.00 L2529.44,1179.50 L2536.28,1128.00 L2543.12,1179.50 L2549.96,1128.00 L2556.79,1179.50 L2563.63,1128.00 L2570.47,1179.50 L2577.31,1128.00 L2584.15,1179.50 L2590.98,1128.00 L2597.82,1179.50 L2604.66,1128.00 L2611.50,1179.50 L2618.34,1128.00 L2625.17,1179.50 L2632.01,1128.00 L2638.85,1179.50 L2645.69,1128.00 L2652.53,1179.50 L2659.36,1128.00 L2666.20,1179.50 L2673.04,1128.00 L2679.88,1179.50 L2686.72,1128.00 L2693.55,1179.50 L2700.39,1128.00 L2707.23,1179.50 L2714.07,1128.00 L2720.91,1179.50 L2727.74,1128.00 L2734.58,1179.50 L2741.42,1126.00 L2748.26,1177.50 L2755.10,1126.00 L2761.93,1179.50 L2768.77,1128.00 L2775.61,1179.50 L2782.45,1126.00 L2789.29,1179.50 L2796.12,1126.00 L2802.96,1179.50 L2809.80,1128.50 L2816.64,1109.20 L2823.48,1022.30 L2830.31,1037.80 L2837.15,1057.70 L2843.99,1144.30 L2850.83,1129.40 L2857.67,1179.50 L2864.50,1128.00 L2871.34,1179.50 L2878.18,1127.00 L2885.02,1179.50 L2891.86,1128.00 L2898.69,1179.50 L2905.53,1128.00 L2912.37,1179.50 L2919.21,1128.00 L2926.05,1179.50 L2932.88,1128.00" fill="none" stroke="#6a9ef4" stroke-width="2.1" stroke-linejoin="round"/><rect x="2094.0" y="639" width="843.7" height="1" fill="#2a2c31"/><rect x="2094.0" y="740" width="843.7" height="1" fill="#2a2c31"/><rect x="2112" y="639.4" width="1" height="200.0" fill="#2a2c31"/><rect x="2252" y="639.4" width="1" height="200.0" fill="#2a2c31"/><rect x="2392" y="639.4" width="1" height="200.0" fill="#2a2c31"/><rect x="2533" y="639.4" width="1" height="200.0" fill="#2a2c31"/><rect x="2673" y="639.4" width="1" height="200.0" fill="#2a2c31"/><rect x="2813" y="639.4" width="1" height="200.0" fill="#2a2c31"/><path d="M2094.00,739.10 L2098.06,704.67 L2105.12,741.62 L2111.84,746.16 L2118.89,736.58 L2126.11,748.34 L2133.17,726.50 L2140.05,763.46 L2147.11,730.70 L2153.83,755.90 L2161.05,748.00 L2168.11,767.99 L2174.82,765.98 L2181.88,763.79 L2189.10,765.14 L2195.82,756.40 L2202.88,769.34 L2209.76,784.79 L2216.82,784.79 L2223.87,791.17 L2230.76,790.00 L2237.81,801.59 L2244.87,796.21 L2252.09,790.84 L2258.81,792.85 L2265.86,801.59 L2272.75,794.87 L2279.80,785.29 L2286.86,763.79 L2293.75,780.25 L2300.80,769.67 L2307.86,780.25 L2314.74,745.82 L2321.80,751.70 L2328.85,758.92 L2335.74,789.49 L2342.79,791.17 L2349.85,793.19 L2356.73,793.19 L2363.79,759.26 L2370.84,739.94 L2377.73,699.63 L2384.79,712.56 L2391.84,715.92 L2398.73,755.90 L2405.78,785.29 L2412.84,746.66 L2419.72,706.85 L2426.78,715.59 L2433.83,780.25 L2440.72,750.86 L2447.77,731.04 L2454.83,700.13 L2461.71,685.35 L2469.95,661.84 L2476.83,685.69 L2483.89,725.66 L2490.61,788.65 L2497.66,799.57 L2504.88,811.33 L2512.02,785.80 L2518.90,779.41 L2525.96,783.61 L2533.18,799.23 L2540.23,780.25 L2546.95,726.50 L2554.01,765.98 L2560.73,793.69 L2567.95,805.45 L2575.00,797.05 L2581.89,797.05 L2588.95,790.84 L2596.00,797.05 L2602.89,792.01 L2610.28,798.73 L2617.16,792.85 L2624.22,797.89 L2630.94,792.01 L2638.16,797.05 L2645.21,793.69 L2651.93,774.38 L2659.16,768.50 L2666.21,741.62 L2672.93,791.17 L2679.98,747.50 L2687.21,768.50 L2694.26,751.36 L2701.15,787.48 L2707.87,762.62 L2714.92,756.74 L2721.98,750.02 L2728.86,765.98 L2735.92,754.22 L2742.97,748.68 L2750.20,757.07 L2756.91,754.22 L2763.97,735.74 L2770.86,740.28 L2778.25,737.93 L2784.96,783.61 L2792.19,751.36 L2798.91,785.29 L2805.96,779.41 L2813.18,783.28 L2819.90,758.42 L2826.96,727.34 L2833.84,720.96 L2840.56,681.99 L2847.95,677.79 L2855.18,680.65 L2861.89,703.83 L2868.95,727.01 L2875.84,710.88 L2882.89,728.18 L2890.45,724.82 L2897.50,745.82 L2904.73,757.07 L2911.78,784.79 L2918.50,785.80 L2926.06,791.17 L2932.95,785.29 L2932.95,831.6 L2094.00,831.6 Z" fill="rgba(138,184,255,0.08)" stroke="none"/><path d="M2094.00,739.10 L2098.06,704.67 L2105.12,741.62 L2111.84,746.16 L2118.89,736.58 L2126.11,748.34 L2133.17,726.50 L2140.05,763.46 L2147.11,730.70 L2153.83,755.90 L2161.05,748.00 L2168.11,767.99 L2174.82,765.98 L2181.88,763.79 L2189.10,765.14 L2195.82,756.40 L2202.88,769.34 L2209.76,784.79 L2216.82,784.79 L2223.87,791.17 L2230.76,790.00 L2237.81,801.59 L2244.87,796.21 L2252.09,790.84 L2258.81,792.85 L2265.86,801.59 L2272.75,794.87 L2279.80,785.29 L2286.86,763.79 L2293.75,780.25 L2300.80,769.67 L2307.86,780.25 L2314.74,745.82 L2321.80,751.70 L2328.85,758.92 L2335.74,789.49 L2342.79,791.17 L2349.85,793.19 L2356.73,793.19 L2363.79,759.26 L2370.84,739.94 L2377.73,699.63 L2384.79,712.56 L2391.84,715.92 L2398.73,755.90 L2405.78,785.29 L2412.84,746.66 L2419.72,706.85 L2426.78,715.59 L2433.83,780.25 L2440.72,750.86 L2447.77,731.04 L2454.83,700.13 L2461.71,685.35 L2469.95,661.84 L2476.83,685.69 L2483.89,725.66 L2490.61,788.65 L2497.66,799.57 L2504.88,811.33 L2512.02,785.80 L2518.90,779.41 L2525.96,783.61 L2533.18,799.23 L2540.23,780.25 L2546.95,726.50 L2554.01,765.98 L2560.73,793.69 L2567.95,805.45 L2575.00,797.05 L2581.89,797.05 L2588.95,790.84 L2596.00,797.05 L2602.89,792.01 L2610.28,798.73 L2617.16,792.85 L2624.22,797.89 L2630.94,792.01 L2638.16,797.05 L2645.21,793.69 L2651.93,774.38 L2659.16,768.50 L2666.21,741.62 L2672.93,791.17 L2679.98,747.50 L2687.21,768.50 L2694.26,751.36 L2701.15,787.48 L2707.87,762.62 L2714.92,756.74 L2721.98,750.02 L2728.86,765.98 L2735.92,754.22 L2742.97,748.68 L2750.20,757.07 L2756.91,754.22 L2763.97,735.74 L2770.86,740.28 L2778.25,737.93 L2784.96,783.61 L2792.19,751.36 L2798.91,785.29 L2805.96,779.41 L2813.18,783.28 L2819.90,758.42 L2826.96,727.34 L2833.84,720.96 L2840.56,681.99 L2847.95,677.79 L2855.18,680.65 L2861.89,703.83 L2868.95,727.01 L2875.84,710.88 L2882.89,728.18 L2890.45,724.82 L2897.50,745.82 L2904.73,757.07 L2911.78,784.79 L2918.50,785.80 L2926.06,791.17 L2932.95,785.29" fill="none" stroke="#8ab8ff" stroke-width="2.1" stroke-linejoin="round"/><rect x="1111.7" y="1045" width="843.7" height="1" fill="#2a2c31"/><rect x="1111.7" y="1157" width="843.7" height="1" fill="#2a2c31"/><rect x="1130" y="1005.2" width="1" height="200.2" fill="#2a2c31"/><rect x="1270" y="1005.2" width="1" height="200.2" fill="#2a2c31"/><rect x="1410" y="1005.2" width="1" height="200.2" fill="#2a2c31"/><rect x="1551" y="1005.2" width="1" height="200.2" fill="#2a2c31"/><rect x="1691" y="1005.2" width="1" height="200.2" fill="#2a2c31"/><rect x="1831" y="1005.2" width="1" height="200.2" fill="#2a2c31"/><path d="M1111.70,1093.18 L1115.92,1067.99 L1122.97,1124.26 L1129.86,1114.68 L1136.91,1115.86 L1143.97,1125.10 L1150.69,1087.64 L1157.91,1088.98 L1164.96,1085.62 L1171.85,1123.92 L1178.91,1127.62 L1185.96,1141.39 L1192.85,1147.77 L1199.90,1159.20 L1206.96,1157.01 L1213.84,1160.37 L1220.90,1148.61 L1227.95,1152.81 L1234.84,1137.70 L1241.89,1142.73 L1248.95,1146.09 L1255.84,1160.37 L1262.89,1153.99 L1269.95,1151.64 L1276.83,1155.84 L1283.89,1168.77 L1290.94,1139.38 L1297.83,1117.88 L1304.88,1085.62 L1311.94,1094.36 L1318.82,1097.72 L1325.88,1128.46 L1332.93,1117.54 L1339.82,1125.94 L1346.88,1115.52 L1353.93,1141.05 L1360.82,1136.86 L1367.87,1149.12 L1374.93,1141.39 L1381.81,1136.02 L1388.87,1130.98 L1395.92,1119.72 L1402.81,1120.90 L1409.86,1117.54 L1416.92,1124.76 L1423.80,1143.57 L1430.86,1088.98 L1437.91,1059.59 L1444.80,1060.77 L1451.86,1114.18 L1458.91,1117.20 L1465.80,1114.18 L1472.85,1086.46 L1479.91,1064.12 L1487.97,1024.65 L1495.02,1031.88 L1501.91,1062.95 L1508.63,1129.30 L1515.68,1148.61 L1522.74,1171.79 L1529.70,1134.84 L1536.76,1125.60 L1543.98,1131.82 L1551.04,1164.23 L1558.09,1109.14 L1564.98,1055.39 L1572.03,1082.27 L1579.09,1128.46 L1585.97,1181.03 L1593.03,1172.13 L1600.08,1169.61 L1606.97,1149.79 L1614.02,1164.07 L1621.08,1160.88 L1627.96,1170.11 L1635.02,1157.85 L1642.07,1164.91 L1648.96,1165.91 L1656.02,1165.91 L1663.07,1171.29 L1669.96,1154.49 L1677.01,1161.21 L1684.07,1141.89 L1690.95,1153.99 L1698.01,1127.62 L1705.06,1137.19 L1711.95,1132.66 L1719.00,1160.37 L1726.06,1152.81 L1732.95,1156.51 L1740.00,1143.07 L1747.05,1138.03 L1753.94,1134.67 L1761.00,1127.95 L1768.05,1129.30 L1774.94,1091.84 L1781.99,1092.85 L1789.05,1094.02 L1795.93,1122.07 L1802.99,1149.12 L1810.04,1133.83 L1816.93,1146.09 L1823.98,1138.87 L1831.04,1102.76 L1837.93,1110.82 L1844.98,1108.64 L1852.04,1138.54 L1858.92,1099.90 L1865.98,1081.09 L1873.03,1075.88 L1879.92,1088.14 L1886.97,1104.94 L1894.03,1115.86 L1900.91,1134.00 L1907.97,1127.62 L1916.03,1117.88 L1923.09,1122.07 L1930.31,1132.66 L1937.36,1146.09 L1944.42,1159.87 L1951.30,1136.35 L1951.30,1197.4 L1111.70,1197.4 Z" fill="rgba(242,73,92,0.08)" stroke="none"/><path d="M1111.70,1093.18 L1115.92,1067.99 L1122.97,1124.26 L1129.86,1114.68 L1136.91,1115.86 L1143.97,1125.10 L1150.69,1087.64 L1157.91,1088.98 L1164.96,1085.62 L1171.85,1123.92 L1178.91,1127.62 L1185.96,1141.39 L1192.85,1147.77 L1199.90,1159.20 L1206.96,1157.01 L1213.84,1160.37 L1220.90,1148.61 L1227.95,1152.81 L1234.84,1137.70 L1241.89,1142.73 L1248.95,1146.09 L1255.84,1160.37 L1262.89,1153.99 L1269.95,1151.64 L1276.83,1155.84 L1283.89,1168.77 L1290.94,1139.38 L1297.83,1117.88 L1304.88,1085.62 L1311.94,1094.36 L1318.82,1097.72 L1325.88,1128.46 L1332.93,1117.54 L1339.82,1125.94 L1346.88,1115.52 L1353.93,1141.05 L1360.82,1136.86 L1367.87,1149.12 L1374.93,1141.39 L1381.81,1136.02 L1388.87,1130.98 L1395.92,1119.72 L1402.81,1120.90 L1409.86,1117.54 L1416.92,1124.76 L1423.80,1143.57 L1430.86,1088.98 L1437.91,1059.59 L1444.80,1060.77 L1451.86,1114.18 L1458.91,1117.20 L1465.80,1114.18 L1472.85,1086.46 L1479.91,1064.12 L1487.97,1024.65 L1495.02,1031.88 L1501.91,1062.95 L1508.63,1129.30 L1515.68,1148.61 L1522.74,1171.79 L1529.70,1134.84 L1536.76,1125.60 L1543.98,1131.82 L1551.04,1164.23 L1558.09,1109.14 L1564.98,1055.39 L1572.03,1082.27 L1579.09,1128.46 L1585.97,1181.03 L1593.03,1172.13 L1600.08,1169.61 L1606.97,1149.79 L1614.02,1164.07 L1621.08,1160.88 L1627.96,1170.11 L1635.02,1157.85 L1642.07,1164.91 L1648.96,1165.91 L1656.02,1165.91 L1663.07,1171.29 L1669.96,1154.49 L1677.01,1161.21 L1684.07,1141.89 L1690.95,1153.99 L1698.01,1127.62 L1705.06,1137.19 L1711.95,1132.66 L1719.00,1160.37 L1726.06,1152.81 L1732.95,1156.51 L1740.00,1143.07 L1747.05,1138.03 L1753.94,1134.67 L1761.00,1127.95 L1768.05,1129.30 L1774.94,1091.84 L1781.99,1092.85 L1789.05,1094.02 L1795.93,1122.07 L1802.99,1149.12 L1810.04,1133.83 L1816.93,1146.09 L1823.98,1138.87 L1831.04,1102.76 L1837.93,1110.82 L1844.98,1108.64 L1852.04,1138.54 L1858.92,1099.90 L1865.98,1081.09 L1873.03,1075.88 L1879.92,1088.14 L1886.97,1104.94 L1894.03,1115.86 L1900.91,1134.00 L1907.97,1127.62 L1916.03,1117.88 L1923.09,1122.07 L1930.31,1132.66 L1937.36,1146.09 L1944.42,1159.87 L1951.30,1136.35" fill="none" stroke="#ec5a6b" stroke-width="2.1" stroke-linejoin="round"/><rect x="1086.5" y="639" width="868.9" height="1" fill="#2a2c31"/><rect x="1086.5" y="703" width="868.9" height="1" fill="#2a2c31"/><rect x="1086.5" y="767" width="868.9" height="1" fill="#2a2c31"/><rect x="1086.5" y="830" width="868.9" height="1" fill="#2a2c31"/><rect x="1104" y="639.4" width="1" height="200.0" fill="#2a2c31"/><rect x="1249" y="639.4" width="1" height="200.0" fill="#2a2c31"/><rect x="1394" y="639.4" width="1" height="200.0" fill="#2a2c31"/><rect x="1538" y="639.4" width="1" height="200.0" fill="#2a2c31"/><rect x="1683" y="639.4" width="1" height="200.0" fill="#2a2c31"/><rect x="1828" y="639.4" width="1" height="200.0" fill="#2a2c31"/><path d="M1090.00,803 L1096.20,830.0 L1090.00,830.0 Z M1097.23,803 L1103.43,830.0 L1097.23,830.0 Z M1104.46,803 L1110.66,830.0 L1104.46,830.0 Z M1111.69,803 L1117.89,830.0 L1111.69,830.0 Z M1118.92,803 L1125.12,830.0 L1118.92,830.0 Z M1126.16,803 L1132.36,830.0 L1126.16,830.0 Z M1133.39,803 L1139.59,830.0 L1133.39,830.0 Z M1140.62,803 L1146.82,830.0 L1140.62,830.0 Z M1147.85,803 L1154.05,830.0 L1147.85,830.0 Z M1155.08,803 L1161.28,830.0 L1155.08,830.0 Z M1162.31,803 L1168.51,830.0 L1162.31,830.0 Z M1169.54,803 L1175.74,830.0 L1169.54,830.0 Z M1176.77,803 L1182.97,830.0 L1176.77,830.0 Z M1184.00,803 L1190.20,830.0 L1184.00,830.0 Z M1191.24,803 L1197.44,830.0 L1191.24,830.0 Z M1198.47,803 L1204.67,830.0 L1198.47,830.0 Z M1205.70,803 L1211.90,830.0 L1205.70,830.0 Z M1212.93,803 L1219.13,830.0 L1212.93,830.0 Z M1220.16,803 L1226.36,830.0 L1220.16,830.0 Z M1227.39,803 L1233.59,830.0 L1227.39,830.0 Z M1234.62,803 L1240.82,830.0 L1234.62,830.0 Z M1241.85,803 L1248.05,830.0 L1241.85,830.0 Z M1249.08,803 L1255.28,830.0 L1249.08,830.0 Z M1256.32,803 L1262.52,830.0 L1256.32,830.0 Z M1263.55,803 L1269.75,830.0 L1263.55,830.0 Z M1270.78,803 L1276.98,830.0 L1270.78,830.0 Z M1278.01,803 L1284.21,830.0 L1278.01,830.0 Z M1285.24,803 L1291.44,830.0 L1285.24,830.0 Z M1292.47,803 L1298.67,830.0 L1292.47,830.0 Z M1299.70,803 L1305.90,830.0 L1299.70,830.0 Z M1306.93,803 L1313.13,830.0 L1306.93,830.0 Z M1314.16,803 L1320.36,830.0 L1314.16,830.0 Z M1321.39,803 L1327.59,830.0 L1321.39,830.0 Z M1328.63,803 L1334.83,830.0 L1328.63,830.0 Z M1335.86,803 L1342.06,830.0 L1335.86,830.0 Z M1343.09,803 L1349.29,830.0 L1343.09,830.0 Z M1350.32,803 L1356.52,830.0 L1350.32,830.0 Z M1357.55,803 L1363.75,830.0 L1357.55,830.0 Z M1364.78,803 L1370.98,830.0 L1364.78,830.0 Z M1372.01,803 L1378.21,830.0 L1372.01,830.0 Z M1379.24,803 L1385.44,830.0 L1379.24,830.0 Z M1386.47,803 L1392.67,830.0 L1386.47,830.0 Z M1393.71,803 L1399.91,830.0 L1393.71,830.0 Z M1400.94,803 L1407.14,830.0 L1400.94,830.0 Z M1408.17,803 L1414.37,830.0 L1408.17,830.0 Z M1415.40,803 L1421.60,830.0 L1415.40,830.0 Z M1422.63,803 L1428.83,830.0 L1422.63,830.0 Z M1429.86,803 L1436.06,830.0 L1429.86,830.0 Z M1437.09,803 L1443.29,830.0 L1437.09,830.0 Z M1444.32,803 L1450.52,830.0 L1444.32,830.0 Z M1451.55,803 L1457.75,830.0 L1451.55,830.0 Z M1458.79,803 L1464.99,830.0 L1458.79,830.0 Z M1466.02,803 L1472.22,830.0 L1466.02,830.0 Z M1473.25,803 L1479.45,830.0 L1473.25,830.0 Z M1480.48,803 L1486.68,830.0 L1480.48,830.0 Z M1487.71,803 L1493.91,830.0 L1487.71,830.0 Z M1494.94,803 L1501.14,830.0 L1494.94,830.0 Z M1502.17,803 L1508.37,830.0 L1502.17,830.0 Z M1509.40,803 L1515.60,830.0 L1509.40,830.0 Z M1516.63,803 L1522.83,830.0 L1516.63,830.0 Z M1523.87,803 L1530.07,830.0 L1523.87,830.0 Z M1531.10,803 L1537.30,830.0 L1531.10,830.0 Z M1538.33,803 L1544.53,830.0 L1538.33,830.0 Z M1545.56,803 L1551.76,830.0 L1545.56,830.0 Z M1552.79,803 L1558.99,830.0 L1552.79,830.0 Z M1560.02,803 L1566.22,830.0 L1560.02,830.0 Z M1567.25,803 L1573.45,830.0 L1567.25,830.0 Z M1574.48,803 L1580.68,830.0 L1574.48,830.0 Z M1581.71,803 L1587.91,830.0 L1581.71,830.0 Z M1588.95,803 L1595.15,830.0 L1588.95,830.0 Z M1596.18,803 L1602.38,830.0 L1596.18,830.0 Z M1603.41,803 L1609.61,830.0 L1603.41,830.0 Z M1610.64,803 L1616.84,830.0 L1610.64,830.0 Z M1617.87,803 L1624.07,830.0 L1617.87,830.0 Z M1625.10,803 L1631.30,830.0 L1625.10,830.0 Z M1632.33,803 L1638.53,830.0 L1632.33,830.0 Z M1639.56,803 L1645.76,830.0 L1639.56,830.0 Z M1646.79,803 L1652.99,830.0 L1646.79,830.0 Z M1654.03,803 L1660.23,830.0 L1654.03,830.0 Z M1661.26,803 L1667.46,830.0 L1661.26,830.0 Z M1668.49,803 L1674.69,830.0 L1668.49,830.0 Z M1675.72,803 L1681.92,830.0 L1675.72,830.0 Z M1682.95,803 L1689.15,830.0 L1682.95,830.0 Z M1690.18,803 L1696.38,830.0 L1690.18,830.0 Z M1697.41,803 L1703.61,830.0 L1697.41,830.0 Z M1704.64,803 L1710.84,830.0 L1704.64,830.0 Z M1711.87,803 L1718.07,830.0 L1711.87,830.0 Z M1719.11,803 L1725.31,830.0 L1719.11,830.0 Z M1726.34,803 L1732.54,830.0 L1726.34,830.0 Z M1733.57,803 L1739.77,830.0 L1733.57,830.0 Z M1740.80,803 L1747.00,830.0 L1740.80,830.0 Z M1748.03,803 L1754.23,830.0 L1748.03,830.0 Z M1755.26,803 L1761.46,830.0 L1755.26,830.0 Z M1762.49,803 L1768.69,830.0 L1762.49,830.0 Z M1769.72,803 L1775.92,830.0 L1769.72,830.0 Z M1776.95,803 L1783.15,830.0 L1776.95,830.0 Z M1784.18,803 L1790.38,830.0 L1784.18,830.0 Z M1791.42,803 L1797.62,830.0 L1791.42,830.0 Z M1798.65,803 L1804.85,830.0 L1798.65,830.0 Z M1805.88,803 L1812.08,830.0 L1805.88,830.0 Z M1813.11,803 L1819.31,830.0 L1813.11,830.0 Z M1820.34,803 L1826.54,830.0 L1820.34,830.0 Z M1827.57,803 L1833.77,830.0 L1827.57,830.0 Z M1834.80,803 L1841.00,830.0 L1834.80,830.0 Z M1842.03,803 L1848.23,830.0 L1842.03,830.0 Z M1849.26,803 L1855.46,830.0 L1849.26,830.0 Z M1856.50,803 L1862.70,830.0 L1856.50,830.0 Z M1863.73,803 L1869.93,830.0 L1863.73,830.0 Z M1870.96,803 L1877.16,830.0 L1870.96,830.0 Z M1878.19,803 L1884.39,830.0 L1878.19,830.0 Z M1885.42,803 L1891.62,830.0 L1885.42,830.0 Z M1892.65,803 L1898.85,830.0 L1892.65,830.0 Z M1899.88,803 L1906.08,830.0 L1899.88,830.0 Z M1907.11,803 L1913.31,830.0 L1907.11,830.0 Z M1914.34,803 L1920.54,830.0 L1914.34,830.0 Z M1921.58,803 L1927.78,830.0 L1921.58,830.0 Z M1928.81,803 L1935.01,830.0 L1928.81,830.0 Z M1936.04,803 L1942.24,830.0 L1936.04,830.0 Z M1943.27,803 L1949.47,830.0 L1943.27,830.0 Z M1950.50,803 L1956.70,830.0 L1950.50,830.0 Z " fill="rgba(250,222,42,0.16)"/><path d="M1086.5,814 L1089.5,829 L1090.00,830.0 L1090.00,803 L1096.20,830.0 L1097.23,830.0 L1097.23,803 L1103.43,830.0 L1104.46,830.0 L1104.46,803 L1110.66,830.0 L1111.69,830.0 L1111.69,803 L1117.89,830.0 L1118.92,830.0 L1118.92,803 L1125.12,830.0 L1126.16,830.0 L1126.16,803 L1132.36,830.0 L1133.39,830.0 L1133.39,803 L1139.59,830.0 L1140.62,830.0 L1140.62,803 L1146.82,830.0 L1147.85,830.0 L1147.85,803 L1154.05,830.0 L1155.08,830.0 L1155.08,803 L1161.28,830.0 L1162.31,830.0 L1162.31,803 L1168.51,830.0 L1169.54,830.0 L1169.54,803 L1175.74,830.0 L1176.77,830.0 L1176.77,803 L1182.97,830.0 L1184.00,830.0 L1184.00,803 L1190.20,830.0 L1191.24,830.0 L1191.24,803 L1197.44,830.0 L1198.47,830.0 L1198.47,803 L1204.67,830.0 L1205.70,830.0 L1205.70,803 L1211.90,830.0 L1212.93,830.0 L1212.93,803 L1219.13,830.0 L1220.16,830.0 L1220.16,803 L1226.36,830.0 L1227.39,830.0 L1227.39,803 L1233.59,830.0 L1234.62,830.0 L1234.62,803 L1240.82,830.0 L1241.85,830.0 L1241.85,803 L1248.05,830.0 L1249.08,830.0 L1249.08,803 L1255.28,830.0 L1256.32,830.0 L1256.32,803 L1262.52,830.0 L1263.55,830.0 L1263.55,803 L1269.75,830.0 L1270.78,830.0 L1270.78,803 L1276.98,830.0 L1278.01,830.0 L1278.01,803 L1284.21,830.0 L1285.24,830.0 L1285.24,803 L1291.44,830.0 L1292.47,830.0 L1292.47,803 L1298.67,830.0 L1299.70,830.0 L1299.70,803 L1305.90,830.0 L1306.93,830.0 L1306.93,803 L1313.13,830.0 L1314.16,830.0 L1314.16,803 L1320.36,830.0 L1321.39,830.0 L1321.39,803 L1327.59,830.0 L1328.63,830.0 L1328.63,803 L1334.83,830.0 L1335.86,830.0 L1335.86,803 L1342.06,830.0 L1343.09,830.0 L1343.09,803 L1349.29,830.0 L1350.32,830.0 L1350.32,803 L1356.52,830.0 L1357.55,830.0 L1357.55,803 L1363.75,830.0 L1364.78,830.0 L1364.78,803 L1370.98,830.0 L1372.01,830.0 L1372.01,803 L1378.21,830.0 L1379.24,830.0 L1379.24,803 L1385.44,830.0 L1386.47,830.0 L1386.47,803 L1392.67,830.0 L1393.71,830.0 L1393.71,803 L1399.91,830.0 L1400.94,830.0 L1400.94,803 L1407.14,830.0 L1408.17,830.0 L1408.17,803 L1414.37,830.0 L1415.40,830.0 L1415.40,803 L1421.60,830.0 L1422.63,830.0 L1422.63,803 L1428.83,830.0 L1429.86,830.0 L1429.86,803 L1436.06,830.0 L1437.09,830.0 L1437.09,803 L1443.29,830.0 L1444.32,830.0 L1444.32,803 L1450.52,830.0 L1451.55,830.0 L1451.55,803 L1457.75,830.0 L1458.79,830.0 L1458.79,803 L1464.99,830.0 L1466.02,830.0 L1466.02,803 L1472.22,830.0 L1473.25,830.0 L1473.25,803 L1479.45,830.0 L1480.48,830.0 L1480.48,803 L1486.68,830.0 L1487.71,830.0 L1487.71,803 L1493.91,830.0 L1494.94,830.0 L1494.94,803 L1501.14,830.0 L1502.17,830.0 L1502.17,803 L1508.37,830.0 L1509.40,830.0 L1509.40,803 L1515.60,830.0 L1516.63,830.0 L1516.63,803 L1522.83,830.0 L1523.87,830.0 L1523.87,803 L1530.07,830.0 L1531.10,830.0 L1531.10,803 L1537.30,830.0 L1538.33,830.0 L1538.33,803 L1544.53,830.0 L1545.56,830.0 L1545.56,803 L1551.76,830.0 L1552.79,830.0 L1552.79,803 L1558.99,830.0 L1560.02,830.0 L1560.02,803 L1566.22,830.0 L1567.25,830.0 L1567.25,803 L1573.45,830.0 L1574.48,830.0 L1574.48,803 L1580.68,830.0 L1581.71,830.0 L1581.71,803 L1587.91,830.0 L1588.95,830.0 L1588.95,803 L1595.15,830.0 L1596.18,830.0 L1596.18,803 L1602.38,830.0 L1603.41,830.0 L1603.41,803 L1609.61,830.0 L1610.64,830.0 L1610.64,803 L1616.84,830.0 L1617.87,830.0 L1617.87,803 L1624.07,830.0 L1625.10,830.0 L1625.10,803 L1631.30,830.0 L1632.33,830.0 L1632.33,803 L1638.53,830.0 L1639.56,830.0 L1639.56,803 L1645.76,830.0 L1646.79,830.0 L1646.79,803 L1652.99,830.0 L1654.03,830.0 L1654.03,803 L1660.23,830.0 L1661.26,830.0 L1661.26,803 L1667.46,830.0 L1668.49,830.0 L1668.49,803 L1674.69,830.0 L1675.72,830.0 L1675.72,803 L1681.92,830.0 L1682.95,830.0 L1682.95,803 L1689.15,830.0 L1690.18,830.0 L1690.18,803 L1696.38,830.0 L1697.41,830.0 L1697.41,803 L1703.61,830.0 L1704.64,830.0 L1704.64,803 L1710.84,830.0 L1711.87,830.0 L1711.87,803 L1718.07,830.0 L1719.11,830.0 L1719.11,803 L1725.31,830.0 L1726.34,830.0 L1726.34,803 L1732.54,830.0 L1733.57,830.0 L1733.57,803 L1739.77,830.0 L1740.80,830.0 L1740.80,803 L1747.00,830.0 L1748.03,830.0 L1748.03,803 L1754.23,830.0 L1755.26,830.0 L1755.26,803 L1761.46,830.0 L1762.49,830.0 L1762.49,803 L1768.69,830.0 L1769.72,830.0 L1769.72,803 L1775.92,830.0 L1776.95,830.0 L1776.95,803 L1783.15,830.0 L1784.18,830.0 L1784.18,803 L1790.38,830.0 L1791.42,830.0 L1791.42,803 L1797.62,830.0 L1798.65,830.0 L1798.65,803 L1804.85,830.0 L1805.88,830.0 L1805.88,803 L1812.08,830.0 L1813.11,830.0 L1813.11,803 L1819.31,830.0 L1820.34,830.0 L1820.34,803 L1826.54,830.0 L1827.57,830.0 L1827.57,803 L1833.77,830.0 L1834.80,830.0 L1834.80,803 L1841.00,830.0 L1842.03,830.0 L1842.03,803 L1848.23,830.0 L1849.26,830.0 L1849.26,803 L1855.46,830.0 L1856.50,830.0 L1856.50,803 L1862.70,830.0 L1863.73,830.0 L1863.73,803 L1869.93,830.0 L1870.96,830.0 L1870.96,803 L1877.16,830.0 L1878.19,830.0 L1878.19,803 L1884.39,830.0 L1885.42,830.0 L1885.42,803 L1891.62,830.0 L1892.65,830.0 L1892.65,803 L1898.85,830.0 L1899.88,830.0 L1899.88,803 L1906.08,830.0 L1907.11,830.0 L1907.11,803 L1913.31,830.0 L1914.34,830.0 L1914.34,803 L1920.54,830.0 L1921.58,830.0 L1921.58,803 L1927.78,830.0 L1928.81,830.0 L1928.81,803 L1935.01,830.0 L1936.04,830.0 L1936.04,803 L1942.24,830.0 L1943.27,830.0 L1943.27,803 L1949.47,830.0 L1950.50,830.0 L1950.50,803 L1953.00,830.0 " fill="none" stroke="#f6d64a" stroke-width="2" stroke-linejoin="miter"/><path d="M1090.80,814.5 L1095.60,830.0 M1098.03,814.5 L1102.83,830.0 M1105.26,814.5 L1110.06,830.0 M1112.49,814.5 L1117.29,830.0 M1119.72,814.5 L1124.52,830.0 M1126.96,814.5 L1131.76,830.0 M1134.19,814.5 L1138.99,830.0 M1141.42,814.5 L1146.22,830.0 M1148.65,814.5 L1153.45,830.0 M1155.88,814.5 L1160.68,830.0 M1163.11,814.5 L1167.91,830.0 M1170.34,814.5 L1175.14,830.0 M1177.57,814.5 L1182.37,830.0 M1184.80,814.5 L1189.60,830.0 M1192.04,814.5 L1196.84,830.0 M1199.27,814.5 L1204.07,830.0 M1206.50,814.5 L1211.30,830.0 M1213.73,814.5 L1218.53,830.0 M1220.96,814.5 L1225.76,830.0 M1228.19,814.5 L1232.99,830.0 M1235.42,814.5 L1240.22,830.0 M1242.65,814.5 L1247.45,830.0 M1249.88,814.5 L1254.68,830.0 M1257.12,814.5 L1261.92,830.0 M1264.35,814.5 L1269.15,830.0 M1271.58,814.5 L1276.38,830.0 M1278.81,814.5 L1283.61,830.0 M1286.04,814.5 L1290.84,830.0 M1293.27,814.5 L1298.07,830.0 M1300.50,814.5 L1305.30,830.0 M1307.73,814.5 L1312.53,830.0 M1314.96,814.5 L1319.76,830.0 M1322.19,814.5 L1326.99,830.0 M1329.43,814.5 L1334.23,830.0 M1336.66,814.5 L1341.46,830.0 M1343.89,814.5 L1348.69,830.0 M1351.12,814.5 L1355.92,830.0 M1358.35,814.5 L1363.15,830.0 M1365.58,814.5 L1370.38,830.0 M1372.81,814.5 L1377.61,830.0 M1380.04,814.5 L1384.84,830.0 M1387.27,814.5 L1392.07,830.0 M1394.51,814.5 L1399.31,830.0 M1401.74,814.5 L1406.54,830.0 M1408.97,814.5 L1413.77,830.0 M1416.20,814.5 L1421.00,830.0 M1423.43,814.5 L1428.23,830.0 M1430.66,814.5 L1435.46,830.0 M1437.89,814.5 L1442.69,830.0 M1445.12,814.5 L1449.92,830.0 M1452.35,814.5 L1457.15,830.0 M1459.59,814.5 L1464.39,830.0 M1466.82,814.5 L1471.62,830.0 M1474.05,814.5 L1478.85,830.0 M1481.28,814.5 L1486.08,830.0 M1488.51,814.5 L1493.31,830.0 M1495.74,814.5 L1500.54,830.0 M1502.97,814.5 L1507.77,830.0 M1510.20,814.5 L1515.00,830.0 M1517.43,814.5 L1522.23,830.0 M1524.67,814.5 L1529.47,830.0 M1531.90,814.5 L1536.70,830.0 M1539.13,814.5 L1543.93,830.0 M1546.36,814.5 L1551.16,830.0 M1553.59,814.5 L1558.39,830.0 M1560.82,814.5 L1565.62,830.0 M1568.05,814.5 L1572.85,830.0 M1575.28,814.5 L1580.08,830.0 M1582.51,814.5 L1587.31,830.0 M1589.75,814.5 L1594.55,830.0 M1596.98,814.5 L1601.78,830.0 M1604.21,814.5 L1609.01,830.0 M1611.44,814.5 L1616.24,830.0 M1618.67,814.5 L1623.47,830.0 M1625.90,814.5 L1630.70,830.0 M1633.13,814.5 L1637.93,830.0 M1640.36,814.5 L1645.16,830.0 M1647.59,814.5 L1652.39,830.0 M1654.83,814.5 L1659.63,830.0 M1662.06,814.5 L1666.86,830.0 M1669.29,814.5 L1674.09,830.0 M1676.52,814.5 L1681.32,830.0 M1683.75,814.5 L1688.55,830.0 M1690.98,814.5 L1695.78,830.0 M1698.21,814.5 L1703.01,830.0 M1705.44,814.5 L1710.24,830.0 M1712.67,814.5 L1717.47,830.0 M1719.91,814.5 L1724.71,830.0 M1727.14,814.5 L1731.94,830.0 M1734.37,814.5 L1739.17,830.0 M1741.60,814.5 L1746.40,830.0 M1748.83,814.5 L1753.63,830.0 M1756.06,814.5 L1760.86,830.0 M1763.29,814.5 L1768.09,830.0 M1770.52,814.5 L1775.32,830.0 M1777.75,814.5 L1782.55,830.0 M1784.98,814.5 L1789.78,830.0 M1792.22,814.5 L1797.02,830.0 M1799.45,814.5 L1804.25,830.0 M1806.68,814.5 L1811.48,830.0 M1813.91,814.5 L1818.71,830.0 M1821.14,814.5 L1825.94,830.0 M1828.37,814.5 L1833.17,830.0 M1835.60,814.5 L1840.40,830.0 M1842.83,814.5 L1847.63,830.0 M1850.06,814.5 L1854.86,830.0 M1857.30,814.5 L1862.10,830.0 M1864.53,814.5 L1869.33,830.0 M1871.76,814.5 L1876.56,830.0 M1878.99,814.5 L1883.79,830.0 M1886.22,814.5 L1891.02,830.0 M1893.45,814.5 L1898.25,830.0 M1900.68,814.5 L1905.48,830.0 M1907.91,814.5 L1912.71,830.0 M1915.14,814.5 L1919.94,830.0 M1922.38,814.5 L1927.18,830.0 M1929.61,814.5 L1934.41,830.0 M1936.84,814.5 L1941.64,830.0 M1944.07,814.5 L1948.87,830.0 M1951.30,814.5 L1956.10,830.0 " fill="none" stroke="#f0d040" stroke-width="1.8"/><path d="M1090.00,830.0 L1090.00,758.16 M1097.23,830.0 L1097.23,758.16 M1104.46,830.0 L1104.46,758.16 M1111.69,830.0 L1111.69,755.07 M1118.92,830.0 L1118.92,755.07 M1126.16,830.0 L1126.16,755.07 M1133.39,830.0 L1133.39,755.07 M1140.62,830.0 L1140.62,755.07 M1147.85,830.0 L1147.85,753.52 M1155.08,830.0 L1155.08,751.20 M1162.31,830.0 L1162.31,751.20 M1169.54,830.0 L1169.54,751.20 M1176.77,830.0 L1176.77,751.20 M1184.00,830.0 L1184.00,751.20 M1191.24,830.0 L1191.24,748.50 M1198.47,830.0 L1198.47,748.50 M1205.70,830.0 L1205.70,745.40 M1212.93,830.0 L1212.93,745.40 M1220.16,830.0 L1220.16,745.40 M1227.39,830.0 L1227.39,745.40 M1234.62,830.0 L1234.62,741.92 M1241.85,830.0 L1241.85,741.92 M1249.08,830.0 L1249.08,739.60 M1256.32,830.0 L1256.32,739.60 M1263.55,830.0 L1263.55,739.60 M1270.78,830.0 L1270.78,739.60 M1278.01,830.0 L1278.01,739.60 M1285.24,830.0 L1285.24,739.60 M1292.47,830.0 L1292.47,738.83 M1299.70,830.0 L1299.70,738.83 M1306.93,830.0 L1306.93,738.83 M1314.16,830.0 L1314.16,736.89 M1321.39,830.0 L1321.39,736.89 M1328.63,830.0 L1328.63,734.96 M1335.86,830.0 L1335.86,734.96 M1343.09,830.0 L1343.09,734.96 M1350.32,830.0 L1350.32,731.87 M1357.55,830.0 L1357.55,731.87 M1364.78,830.0 L1364.78,731.87 M1372.01,830.0 L1372.01,729.16 M1379.24,830.0 L1379.24,729.16 M1386.47,830.0 L1386.47,729.16 M1393.71,830.0 L1393.71,729.16 M1400.94,830.0 L1400.94,729.16 M1408.17,830.0 L1408.17,727.23 M1415.40,830.0 L1415.40,723.36 M1422.63,830.0 L1422.63,723.36 M1429.86,830.0 L1429.86,723.36 M1437.09,830.0 L1437.09,723.36 M1444.32,830.0 L1444.32,723.36 M1451.55,830.0 L1451.55,723.36 M1458.79,830.0 L1458.79,721.43 M1466.02,830.0 L1466.02,719.49 M1473.25,830.0 L1473.25,719.49 M1480.48,830.0 L1480.48,718.33 M1487.71,830.0 L1487.71,718.33 M1494.94,830.0 L1494.94,718.33 M1502.17,830.0 L1502.17,716.79 M1509.40,830.0 L1509.40,716.79 M1516.63,830.0 L1516.63,716.79 M1523.87,830.0 L1523.87,714.85 M1531.10,830.0 L1531.10,711.76 M1538.33,830.0 L1538.33,711.76 M1545.56,830.0 L1545.56,711.76 M1552.79,830.0 L1552.79,711.76 M1560.02,830.0 L1560.02,711.76 M1567.25,830.0 L1567.25,711.76 M1574.48,830.0 L1574.48,711.76 M1581.71,830.0 L1581.71,709.82 M1588.95,830.0 L1588.95,709.82 M1596.18,830.0 L1596.18,706.73 M1603.41,830.0 L1603.41,703.25 M1610.64,830.0 L1610.64,703.25 M1617.87,830.0 L1617.87,703.25 M1625.10,830.0 L1625.10,703.25 M1632.33,830.0 L1632.33,700.93 M1639.56,830.0 L1639.56,697.45 M1646.79,830.0 L1646.79,697.45 M1654.03,830.0 L1654.03,697.45 M1661.26,830.0 L1661.26,697.45 M1668.49,830.0 L1668.49,697.45 M1675.72,830.0 L1675.72,695.52 M1682.95,830.0 L1682.95,695.52 M1690.18,830.0 L1690.18,692.42 M1697.41,830.0 L1697.41,692.42 M1704.64,830.0 L1704.64,692.42 M1711.87,830.0 L1711.87,692.42 M1719.11,830.0 L1719.11,692.42 M1726.34,830.0 L1726.34,692.42 M1733.57,830.0 L1733.57,692.42 M1740.80,830.0 L1740.80,690.49 M1748.03,830.0 L1748.03,688.55 M1755.26,830.0 L1755.26,688.55 M1762.49,830.0 L1762.49,688.55 M1769.72,830.0 L1769.72,686.62 M1776.95,830.0 L1776.95,686.62 M1784.18,830.0 L1784.18,686.62 M1791.42,830.0 L1791.42,686.62 M1798.65,830.0 L1798.65,686.62 M1805.88,830.0 L1805.88,680.82 M1813.11,830.0 L1813.11,680.82 M1820.34,830.0 L1820.34,680.82 M1827.57,830.0 L1827.57,676.95 M1834.80,830.0 L1834.80,676.95 M1842.03,830.0 L1842.03,676.95 M1849.26,830.0 L1849.26,673.09 M1856.50,830.0 L1856.50,673.09 M1863.73,830.0 L1863.73,671.15 M1870.96,830.0 L1870.96,671.15 M1878.19,830.0 L1878.19,671.15 M1885.42,830.0 L1885.42,671.15 M1892.65,830.0 L1892.65,669.22 M1899.88,830.0 L1899.88,669.22 M1907.11,830.0 L1907.11,666.12 M1914.34,830.0 L1914.34,666.12 M1921.58,830.0 L1921.58,666.12 M1928.81,830.0 L1928.81,663.42 M1936.04,830.0 L1936.04,663.42 M1943.27,830.0 L1943.27,663.42 M1950.50,830.0 L1950.50,661.48 " fill="none" stroke="#f9d94c" stroke-width="2.3"/><rect x="1086.5" y="829" width="864" height="3.2" fill="#f2d13a"/></svg>
<div class="b" style="left:0;top:0;width:3020px;height:1718px;box-sizing:border-box;border-right:2px solid #2b2c31;border-bottom:2px solid #2b2c31;border-bottom-left-radius:20px;border-bottom-right-radius:20px;"></div>
</div></body></html>
